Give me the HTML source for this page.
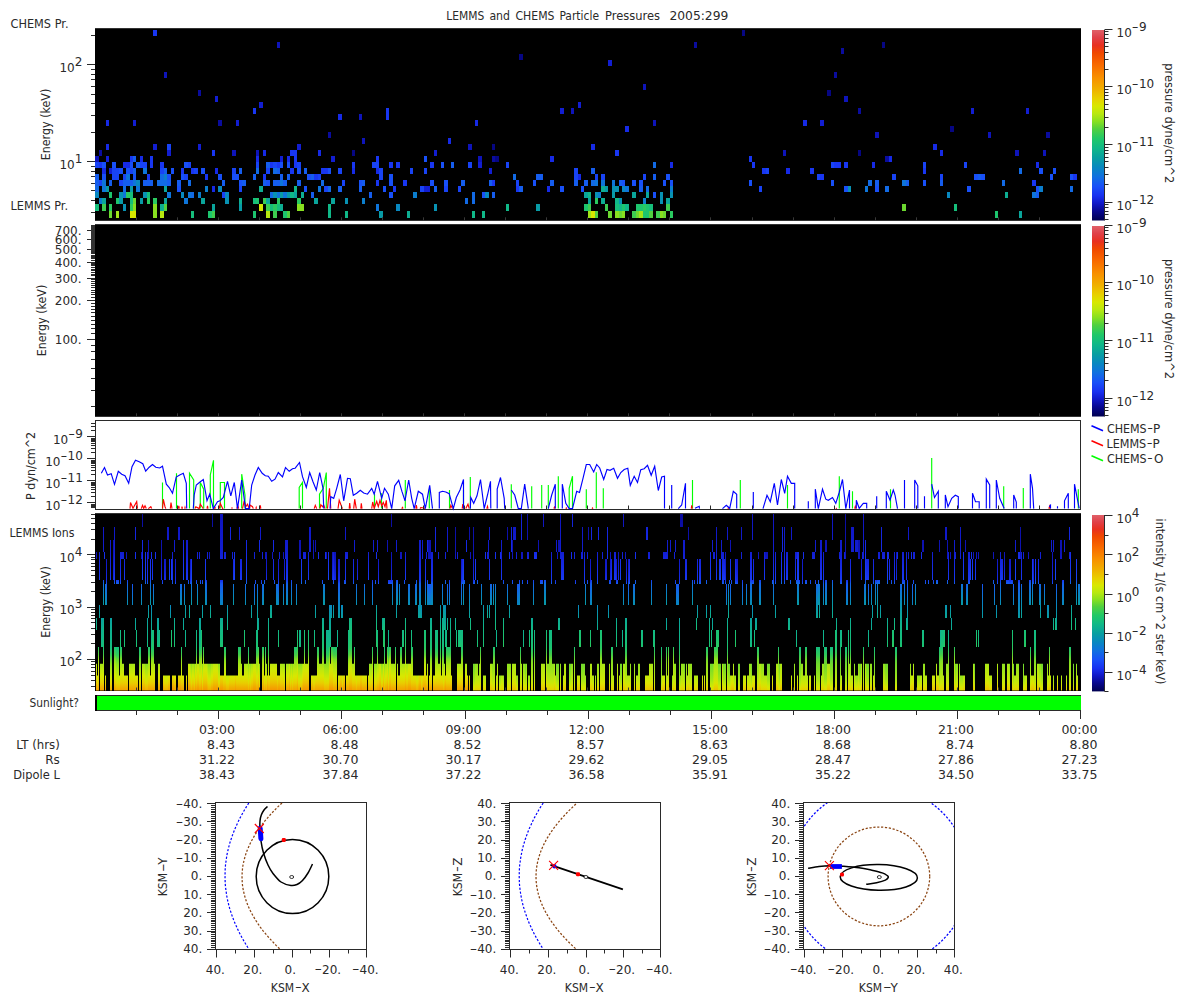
<!DOCTYPE html>
<html lang="en"><head><meta charset="utf-8"><title>LEMMS and CHEMS Particle Pressures 2005:299</title>
<style>html,body{margin:0;padding:0;background:#fff}body{width:1200px;height:1000px;overflow:hidden}svg{display:block}text{white-space:pre}</style>
</head><body>
<svg width="1200" height="1000" viewBox="0 0 1200 1000" font-family="'DejaVu Sans','Liberation Sans',sans-serif" font-size="12" fill="#2a2a2a">
<rect width="1200" height="1000" fill="#fff"/>
<text y="19.8"><tspan x="446.2" textLength="38" lengthAdjust="spacingAndGlyphs">LEMMS</tspan> <tspan x="489.4" textLength="20.6" lengthAdjust="spacingAndGlyphs">and</tspan> <tspan x="515.5" textLength="39" lengthAdjust="spacingAndGlyphs">CHEMS</tspan> <tspan x="559.4" textLength="39.6" lengthAdjust="spacingAndGlyphs">Particle</tspan> <tspan x="605.1" textLength="55" lengthAdjust="spacingAndGlyphs">Pressures</tspan>  <tspan x="669.4" textLength="59" lengthAdjust="spacingAndGlyphs">2005:299</tspan></text>
<defs><linearGradient id="cb" x1="0" y1="1" x2="0" y2="0"><stop offset="0.0" stop-color="#000050"/><stop offset="0.05" stop-color="#080890"/><stop offset="0.09" stop-color="#1018c8"/><stop offset="0.13" stop-color="#1830f0"/><stop offset="0.18" stop-color="#1850f8"/><stop offset="0.23" stop-color="#1070e0"/><stop offset="0.28" stop-color="#0888c0"/><stop offset="0.33" stop-color="#08a0a0"/><stop offset="0.38" stop-color="#10b888"/><stop offset="0.43" stop-color="#20c868"/><stop offset="0.48" stop-color="#50d040"/><stop offset="0.52" stop-color="#88e020"/><stop offset="0.56" stop-color="#b8e810"/><stop offset="0.6" stop-color="#d8e800"/><stop offset="0.64" stop-color="#e8d000"/><stop offset="0.69" stop-color="#f0b000"/><stop offset="0.75" stop-color="#f89000"/><stop offset="0.82" stop-color="#f86800"/><stop offset="0.88" stop-color="#f04800"/><stop offset="0.92" stop-color="#e83020"/><stop offset="0.96" stop-color="#e04048"/><stop offset="1.0" stop-color="#e06068"/></linearGradient></defs>
<rect x="95.0" y="28.2" width="986.0" height="192.60000000000002" fill="#000"/>
<path fill="#060683" d="M352 150h3v6h-3zM492 144h3v6h-3zM495 156h4v6h-4zM519 54h4v6h-4zM742 30h3v6h-3zM827 90h4v6h-4zM858 150h3v6h-3zM882 42h3v6h-3zM950 126h4v6h-4z"/>
<path fill="#0a0c9e" d="M99 150h3v6h-3zM198 90h3v6h-3zM218 120h4v6h-4zM328 132h3v6h-3zM492 156h3v6h-3zM694 42h3v6h-3zM834 72h3v6h-3zM841 48h3v6h-3zM858 108h3v6h-3zM885 156h4v6h-4zM1046 132h4v6h-4z"/>
<path fill="#0e14ba" d="M95 156h4v6h-4zM164 72h3v6h-3zM232 150h4v6h-4zM256 150h3v6h-3zM277 42h3v6h-3zM359 114h3v6h-3zM362 138h3v6h-3zM468 144h4v6h-4zM478 156h4v6h-4zM571 108h3v6h-3zM643 84h3v6h-3zM653 120h3v6h-3zM783 150h3v6h-3zM844 96h4v6h-4zM875 132h4v6h-4zM988 132h3v6h-3zM1015 150h4v6h-4zM1043 150h3v6h-3z"/>
<path fill="#121ed2" d="M106 156h3v6h-3zM109 168h3v6h-3zM133 120h3v6h-3zM153 144h4v6h-4zM167 150h4v6h-4zM198 144h3v6h-3zM215 96h3v6h-3zM236 120h3v6h-3zM259 102h4v6h-4zM280 156h3v6h-3zM297 144h4v6h-4zM331 156h4v6h-4zM424 186h3v6h-3zM427 186h3v6h-3zM434 150h3v6h-3zM478 162h4v6h-4zM489 168h3v6h-3zM560 108h4v6h-4zM578 102h3v6h-3zM608 60h4v6h-4zM820 120h4v6h-4zM971 108h3v6h-3zM1026 108h3v6h-3z"/>
<path fill="#162ae6" d="M102 168h4v6h-4zM106 144h3v6h-3zM106 120h3v6h-3zM123 162h3v6h-3zM126 162h4v6h-4zM140 156h3v6h-3zM212 186h3v6h-3zM215 168h3v6h-3zM256 156h3v6h-3zM263 150h3v6h-3zM287 156h3v6h-3zM318 150h3v6h-3zM338 114h4v6h-4zM352 168h3v6h-3zM376 168h3v6h-3zM448 138h3v6h-3zM475 120h3v6h-3zM547 186h3v6h-3zM550 156h4v6h-4zM578 174h3v6h-3zM591 144h4v6h-4zM625 126h4v6h-4zM670 162h3v6h-3zM786 168h4v6h-4zM803 120h4v6h-4zM872 162h3v6h-3zM889 156h3v6h-3zM933 144h4v6h-4zM940 150h3v6h-3zM1036 162h3v6h-3z"/>
<path fill="#1836f2" d="M99 162h3v6h-3zM130 156h3v6h-3zM147 174h3v6h-3zM150 162h3v6h-3zM150 156h3v6h-3zM153 30h4v6h-4zM160 162h4v6h-4zM181 168h3v6h-3zM191 168h3v6h-3zM205 174h3v6h-3zM212 150h3v6h-3zM253 108h3v6h-3zM263 174h3v6h-3zM270 162h3v6h-3zM277 162h3v6h-3zM290 168h4v6h-4zM290 150h4v6h-4zM294 162h3v6h-3zM294 156h3v6h-3zM294 150h3v6h-3zM314 174h4v6h-4zM321 168h3v6h-3zM324 168h4v6h-4zM352 162h3v6h-3zM376 180h3v6h-3zM376 156h3v6h-3zM386 114h3v6h-3zM386 108h3v6h-3zM389 162h4v6h-4zM393 186h3v6h-3zM396 162h4v6h-4zM403 180h4v6h-4zM430 162h4v6h-4zM492 180h3v6h-3zM516 186h3v6h-3zM615 150h4v6h-4zM749 156h3v6h-3zM752 162h3v6h-3zM762 168h4v6h-4zM810 168h4v6h-4zM820 174h4v6h-4zM834 162h3v6h-3zM837 162h4v6h-4zM844 162h4v6h-4zM923 168h3v6h-3zM1032 180h4v6h-4zM1073 174h4v6h-4z"/>
<path fill="#1843f5" d="M95 162h4v6h-4zM99 180h3v6h-3zM112 174h4v6h-4zM112 168h4v6h-4zM116 174h3v6h-3zM116 168h3v6h-3zM119 180h4v6h-4zM123 174h3v6h-3zM130 168h3v6h-3zM140 162h3v6h-3zM143 162h4v6h-4zM160 168h4v6h-4zM167 144h4v6h-4zM184 174h4v6h-4zM188 162h3v6h-3zM194 168h4v6h-4zM222 192h3v6h-3zM232 168h4v6h-4zM239 186h3v6h-3zM256 162h3v6h-3zM266 168h4v6h-4zM273 162h4v6h-4zM297 162h4v6h-4zM318 174h3v6h-3zM324 186h4v6h-4zM338 168h4v6h-4zM342 180h3v6h-3zM372 162h4v6h-4zM376 162h3v6h-3zM379 174h4v6h-4zM379 168h4v6h-4zM410 168h3v6h-3zM420 186h4v6h-4zM424 168h3v6h-3zM444 186h4v6h-4zM458 186h3v6h-3zM468 162h4v6h-4zM506 162h3v6h-3zM516 180h3v6h-3zM574 174h4v6h-4zM574 168h4v6h-4zM595 174h3v6h-3zM601 174h4v6h-4zM643 174h3v6h-3zM759 186h3v6h-3zM766 168h3v6h-3zM817 174h3v6h-3zM831 162h3v6h-3zM892 174h4v6h-4zM923 162h3v6h-3zM940 174h3v6h-3zM964 162h3v6h-3z"/>
<path fill="#1850f8" d="M102 174h4v6h-4zM102 162h4v6h-4zM112 162h4v6h-4zM119 168h4v6h-4zM126 168h4v6h-4zM130 162h3v6h-3zM133 174h3v6h-3zM167 174h4v6h-4zM171 168h3v6h-3zM177 186h4v6h-4zM181 174h3v6h-3zM184 162h4v6h-4zM201 168h4v6h-4zM218 174h4v6h-4zM232 174h4v6h-4zM236 174h3v6h-3zM239 180h3v6h-3zM266 180h4v6h-4zM280 162h3v6h-3zM287 162h3v6h-3zM297 168h4v6h-4zM304 186h3v6h-3zM307 174h4v6h-4zM328 168h3v6h-3zM359 180h3v6h-3zM383 186h3v6h-3zM389 192h4v6h-4zM389 180h4v6h-4zM389 174h4v6h-4zM424 156h3v6h-3zM430 180h4v6h-4zM441 162h3v6h-3zM444 180h4v6h-4zM482 192h3v6h-3zM533 180h3v6h-3zM560 186h4v6h-4zM581 186h3v6h-3zM622 180h3v6h-3zM632 180h4v6h-4zM639 180h4v6h-4zM653 192h3v6h-3zM663 180h3v6h-3zM666 174h4v6h-4zM670 180h3v6h-3zM749 180h3v6h-3zM831 180h3v6h-3zM844 186h4v6h-4zM875 186h4v6h-4zM923 180h3v6h-3zM967 186h4v6h-4zM974 174h4v6h-4zM981 174h4v6h-4zM1036 186h3v6h-3zM1039 168h4v6h-4zM1050 174h3v6h-3zM1053 168h3v6h-3zM1070 174h3v6h-3z"/>
<path fill="#155dee" d="M95 180h4v6h-4zM95 174h4v6h-4zM109 180h3v6h-3zM123 180h3v6h-3zM126 180h4v6h-4zM130 180h3v6h-3zM133 168h3v6h-3zM133 156h3v6h-3zM136 162h4v6h-4zM143 180h4v6h-4zM147 180h3v6h-3zM150 180h3v6h-3zM164 168h3v6h-3zM167 180h4v6h-4zM177 180h4v6h-4zM222 180h3v6h-3zM239 168h3v6h-3zM242 180h4v6h-4zM253 174h3v6h-3zM263 180h3v6h-3zM266 162h4v6h-4zM273 180h4v6h-4zM277 180h3v6h-3zM277 168h3v6h-3zM280 174h3v6h-3zM283 180h4v6h-4zM287 174h3v6h-3zM297 180h4v6h-4zM304 168h3v6h-3zM311 192h3v6h-3zM311 174h3v6h-3zM338 186h4v6h-4zM359 186h3v6h-3zM362 180h3v6h-3zM369 192h3v6h-3zM434 186h3v6h-3zM451 162h3v6h-3zM461 180h4v6h-4zM489 180h3v6h-3zM492 192h3v6h-3zM519 186h4v6h-4zM536 174h4v6h-4zM540 174h3v6h-3zM550 180h4v6h-4zM574 180h4v6h-4zM584 180h4v6h-4zM591 168h4v6h-4zM619 180h3v6h-3zM639 186h4v6h-4zM653 174h3v6h-3zM875 180h4v6h-4zM906 180h3v6h-3zM940 180h3v6h-3zM978 174h3v6h-3zM1036 192h3v6h-3z"/>
<path fill="#126ae5" d="M95 186h4v6h-4zM123 186h3v6h-3zM157 180h3v6h-3zM160 180h4v6h-4zM160 174h4v6h-4zM164 180h3v6h-3zM188 180h3v6h-3zM191 192h3v6h-3zM256 168h3v6h-3zM270 192h3v6h-3zM273 168h4v6h-4zM321 180h3v6h-3zM328 186h3v6h-3zM465 198h3v6h-3zM472 198h3v6h-3zM472 192h3v6h-3zM513 174h3v6h-3zM591 180h4v6h-4zM646 186h3v6h-3zM653 162h3v6h-3zM868 180h4v6h-4zM885 186h4v6h-4zM1002 180h3v6h-3zM1019 168h3v6h-3zM1070 186h3v6h-3z"/>
<path fill="#0e75da" d="M102 186h4v6h-4zM102 180h4v6h-4zM123 192h3v6h-3zM126 174h4v6h-4zM133 180h3v6h-3zM136 186h4v6h-4zM143 168h4v6h-4zM167 192h4v6h-4zM184 198h4v6h-4zM188 192h3v6h-3zM277 192h3v6h-3zM280 180h3v6h-3zM283 192h4v6h-4zM318 186h3v6h-3zM376 204h3v7h-3zM595 180h3v6h-3zM601 180h4v6h-4zM612 180h3v6h-3zM625 186h4v6h-4zM865 186h3v6h-3zM902 180h4v6h-4zM1032 192h4v6h-4z"/>
<path fill="#0b7ecd" d="M99 198h3v6h-3zM164 174h3v6h-3zM198 192h3v6h-3zM205 186h3v6h-3zM362 198h3v6h-3zM413 192h4v6h-4zM598 192h3v6h-3zM643 198h3v6h-3zM670 186h3v6h-3zM1039 186h4v6h-4z"/>
<path fill="#0888c0" d="M95 192h4v6h-4zM136 180h4v6h-4zM181 192h3v6h-3zM218 186h4v6h-4zM225 192h4v6h-4zM396 204h4v7h-4zM485 192h4v6h-4zM622 186h3v6h-3zM947 192h3v6h-3z"/>
<path fill="#0892b3" d="M119 192h4v6h-4zM123 204h3v7h-3zM143 192h4v6h-4zM225 198h4v6h-4zM273 192h4v6h-4zM345 198h3v6h-3zM434 204h3v7h-3zM595 192h3v6h-3zM612 186h3v6h-3zM615 186h4v6h-4zM619 198h3v6h-3zM660 198h3v6h-3zM660 192h3v6h-3zM670 192h3v6h-3zM848 186h3v6h-3z"/>
<path fill="#089ba6" d="M106 186h3v6h-3zM119 198h4v6h-4zM130 186h3v6h-3zM140 198h3v6h-3zM239 204h3v7h-3zM280 192h3v6h-3zM287 192h3v6h-3zM379 211h4v7h-4zM536 204h4v7h-4zM605 186h3v6h-3zM612 192h3v6h-3z"/>
<path fill="#0aa59b" d="M102 198h4v6h-4zM164 198h3v6h-3zM164 186h3v6h-3zM201 198h4v6h-4zM212 204h3v7h-3zM266 198h4v6h-4zM294 192h3v6h-3zM314 198h4v6h-4zM331 198h4v6h-4zM584 192h4v6h-4zM588 198h3v6h-3zM632 192h4v6h-4zM646 192h3v6h-3zM666 198h4v6h-4zM1019 211h3v7h-3z"/>
<path fill="#0dae92" d="M160 204h4v7h-4zM239 198h3v6h-3zM259 186h4v6h-4zM280 204h3v7h-3zM301 192h3v6h-3zM407 211h3v7h-3zM601 198h4v6h-4zM601 186h4v6h-4zM1005 192h3v6h-3z"/>
<path fill="#10b888" d="M290 192h4v6h-4zM294 186h3v6h-3zM328 211h3v7h-3zM328 204h3v7h-3zM345 211h3v7h-3zM472 211h3v7h-3zM482 211h3v7h-3zM506 204h3v7h-3zM588 192h3v6h-3zM615 198h4v6h-4zM619 204h3v7h-3zM625 204h4v7h-4z"/>
<path fill="#16be7b" d="M95 204h4v7h-4zM130 198h3v6h-3zM130 192h3v6h-3zM147 192h3v6h-3zM191 211h3v7h-3zM253 198h3v6h-3zM270 204h3v7h-3zM277 204h3v7h-3zM615 204h4v7h-4zM649 204h4v7h-4zM954 204h3v7h-3z"/>
<path fill="#1dc56e" d="M109 192h3v6h-3zM116 198h3v6h-3zM208 211h4v7h-4zM253 211h3v7h-3zM256 198h3v6h-3zM283 211h4v7h-4zM584 204h4v7h-4zM622 204h3v7h-3zM636 204h3v7h-3zM639 204h4v7h-4zM643 211h3v7h-3zM646 211h3v7h-3zM646 204h3v7h-3zM995 211h3v7h-3z"/>
<path fill="#2aca60" d="M109 204h3v7h-3zM126 192h4v6h-4zM130 204h3v7h-3zM147 198h3v6h-3zM153 198h4v6h-4zM273 204h4v7h-4zM277 198h3v6h-3zM297 198h4v6h-4zM595 198h3v6h-3zM643 204h3v7h-3zM670 211h3v7h-3z"/>
<path fill="#3dcd50" d="M102 204h4v7h-4zM212 211h3v7h-3zM263 198h3v6h-3zM266 204h4v7h-4zM273 211h4v7h-4zM588 204h3v7h-3zM605 204h3v7h-3zM632 211h4v7h-4zM656 211h4v7h-4zM666 204h4v7h-4z"/>
<path fill="#50d040" d="M164 204h3v7h-3zM287 211h3v7h-3zM595 211h3v7h-3zM649 211h4v7h-4z"/>
<path fill="#6cd830" d="M109 211h3v7h-3zM133 198h3v6h-3zM608 211h4v7h-4zM619 211h3v7h-3zM636 211h3v7h-3zM663 211h3v7h-3zM902 204h4v7h-4z"/>
<path fill="#88e020" d="M133 204h3v7h-3zM153 211h4v7h-4zM153 204h4v7h-4zM297 204h4v7h-4zM301 204h3v7h-3zM615 211h4v7h-4zM622 211h3v7h-3zM660 211h3v7h-3z"/>
<path fill="#a0e418" d="M116 211h3v7h-3zM588 211h3v7h-3zM639 211h4v7h-4z"/>
<path fill="#b8e810" d="M160 211h4v7h-4zM266 211h4v7h-4z"/>
<path fill="#d8e800" d="M130 211h3v7h-3zM133 211h3v7h-3zM259 204h4v7h-4zM591 211h4v7h-4z"/>
<path d="M136.5 217.3V220.8M177.5 217.3V220.8M218.5 217.3V220.8M259.5 217.3V220.8M300.5 217.3V220.8M341.5 217.3V220.8M382.5 217.3V220.8M423.5 217.3V220.8M464.5 217.3V220.8M505.5 217.3V220.8M546.5 217.3V220.8M587.5 217.3V220.8M628.5 217.3V220.8M669.5 217.3V220.8M710.5 217.3V220.8M752.5 217.3V220.8M793.5 217.3V220.8M834.5 217.3V220.8M875.5 217.3V220.8M916.5 217.3V220.8M957.5 217.3V220.8M998.5 217.3V220.8M1039.5 217.3V220.8" stroke="#383838" stroke-width="1" fill="none"/>
<path d="M91.0 212.5H95.0M91.0 200.5H95.0M91.0 190.5H95.0M91.0 183.5H95.0M91.0 176.5H95.0M91.0 171.5H95.0M91.0 166.5H95.0M87.0 161.5H95.0M91.0 132.5H95.0M91.0 115.5H95.0M91.0 103.5H95.0M91.0 94.5H95.0M91.0 86.5H95.0M91.0 79.5H95.0M91.0 74.5H95.0M91.0 69.5H95.0M87.0 64.5H95.0M91.0 35.5H95.0" stroke="#2a2a2a" stroke-width="1" fill="none"/>
<text x="82.3" y="71.9" text-anchor="end" font-size="12">10<tspan dy="-6.1">2</tspan></text>
<text x="82.3" y="168.65" text-anchor="end" font-size="12">10<tspan dy="-6.1">1</tspan></text>
<text x="50" y="124.5" text-anchor="middle" font-size="12" textLength="71.5" lengthAdjust="spacingAndGlyphs" transform="rotate(-90 50 124.5)">Energy (keV)</text>
<text x="10.5" y="28" text-anchor="start" font-size="12" textLength="58" lengthAdjust="spacingAndGlyphs">CHEMS Pr.</text>
<text x="10.5" y="209.5" text-anchor="start" font-size="12" textLength="57.5" lengthAdjust="spacingAndGlyphs">LEMMS Pr.</text>
<rect x="1092" y="30" width="12.5" height="190.5" fill="url(#cb)"/>
<path d="M1104.5 30V220.5" stroke="#2a2a2a" stroke-width="1"/>
<text x="1116.5" y="36.9" text-anchor="start" font-size="12">10<tspan textLength="6.8" lengthAdjust="spacingAndGlyphs" dy="-6.1">-</tspan><tspan dx="0.3">9</tspan></text>
<text x="1116.5" y="93.9" text-anchor="start" font-size="12">10<tspan textLength="6.8" lengthAdjust="spacingAndGlyphs" dy="-6.1">-</tspan><tspan dx="0.3">10</tspan></text>
<text x="1116.5" y="151.9" text-anchor="start" font-size="12">10<tspan textLength="6.8" lengthAdjust="spacingAndGlyphs" dy="-6.1">-</tspan><tspan dx="0.3">11</tspan></text>
<text x="1116.5" y="209.9" text-anchor="start" font-size="12">10<tspan textLength="6.8" lengthAdjust="spacingAndGlyphs" dy="-6.1">-</tspan><tspan dx="0.3">12</tspan></text>
<path d="M1104.5 69.5h4M1104.5 59.5h4M1104.5 52.5h4M1104.5 46.5h4M1104.5 42.5h4M1104.5 38.5h4M1104.5 34.5h4M1104.5 31.5h4M1104.5 127.5h4M1104.5 117.5h4M1104.5 109.5h4M1104.5 104.5h4M1104.5 99.5h4M1104.5 95.5h4M1104.5 92.5h4M1104.5 89.5h4M1104.5 184.5h4M1104.5 174.5h4M1104.5 167.5h4M1104.5 161.5h4M1104.5 157.5h4M1104.5 153.5h4M1104.5 150.5h4M1104.5 147.5h4M1104.5 219.5h4M1104.5 214.5h4M1104.5 211.5h4M1104.5 207.5h4M1104.5 204.5h4M1104.5 29.5h8M1104.5 86.5h8M1104.5 144.5h8M1104.5 202.5h8" stroke="#2a2a2a" fill="none"/>
<text x="1164.5" y="123.2" text-anchor="middle" font-size="12" textLength="120" lengthAdjust="spacingAndGlyphs" transform="rotate(90 1164.5 123.2)">pressure dyne/cm^2</text>
<rect x="95.0" y="224.2" width="986.0" height="192.60000000000002" fill="#000"/>
<path d="M136.5 413.3V416.8M177.5 413.3V416.8M218.5 413.3V416.8M259.5 413.3V416.8M300.5 413.3V416.8M341.5 413.3V416.8M382.5 413.3V416.8M423.5 413.3V416.8M464.5 413.3V416.8M505.5 413.3V416.8M546.5 413.3V416.8M587.5 413.3V416.8M628.5 413.3V416.8M669.5 413.3V416.8M710.5 413.3V416.8M752.5 413.3V416.8M793.5 413.3V416.8M834.5 413.3V416.8M875.5 413.3V416.8M916.5 413.3V416.8M957.5 413.3V416.8M998.5 413.3V416.8M1039.5 413.3V416.8" stroke="#383838" stroke-width="1" fill="none"/>
<path d="M91 406.5H95M91 390.5H95M91 378.5H95M91 368.5H95M91 359.5H95M91 351.5H95M91 345.5H95M91 333.5H95M91 328.5H95M91 324.5H95M91 320.5H95M91 316.5H95M91 312.5H95M91 309.5H95M91 306.5H95M91 303.5H95M91 297.5H95M91 294.5H95M91 292.5H95M91 290.5H95M91 287.5H95M91 285.5H95M91 283.5H95M91 281.5H95M91 279.5H95M91 275.5H95M91 274.5H95M91 272.5H95M91 270.5H95M91 269.5H95M91 267.5H95M91 265.5H95M91 264.5H95M91 263.5H95M91 260.5H95M91 258.5H95M91 257.5H95M91 256.5H95M91 255.5H95M91 253.5H95M91 252.5H95M91 251.5H95M91 250.5H95M91 248.5H95M91 246.5H95M91 245.5H95M91 244.5H95M91 243.5H95M91 242.5H95M91 241.5H95M91 240.5H95M91 239.5H95M91 238.5H95M91 237.5H95M91 236.5H95M91 235.5H95M91 234.5H95M91 233.5H95M91 232.5H95M91 232.5H95M91 231.5H95M91 229.5H95M91 228.5H95M91 228.5H95M91 227.5H95M91 226.5H95M91 225.5H95M91 225.5H95M87 339.5H95M87 300.5H95M87 278.5H95M87 262.5H95M87 249.5H95M87 239.5H95M87 230.5H95" stroke="#2a2a2a" fill="none"/>
<rect x="91" y="225.5" width="4" height="26" fill="#333"/>
<text x="81.5" y="343.9" text-anchor="end" font-size="12">100.</text>
<text x="81.5" y="304.9" text-anchor="end" font-size="12">200.</text>
<text x="81.5" y="282.9" text-anchor="end" font-size="12">300.</text>
<text x="81.5" y="266.9" text-anchor="end" font-size="12">400.</text>
<text x="81.5" y="253.9" text-anchor="end" font-size="12">500.</text>
<text x="81.5" y="243.9" text-anchor="end" font-size="12">600.</text>
<text x="81.5" y="234.9" text-anchor="end" font-size="12">700.</text>
<text x="46" y="320.5" text-anchor="middle" font-size="12" textLength="71.5" lengthAdjust="spacingAndGlyphs" transform="rotate(-90 46 320.5)">Energy (keV)</text>
<rect x="1092" y="226" width="12.5" height="190.5" fill="url(#cb)"/>
<path d="M1104.5 226V416.5" stroke="#2a2a2a" stroke-width="1"/>
<text x="1116.5" y="232.9" text-anchor="start" font-size="12">10<tspan textLength="6.8" lengthAdjust="spacingAndGlyphs" dy="-6.1">-</tspan><tspan dx="0.3">9</tspan></text>
<text x="1116.5" y="289.9" text-anchor="start" font-size="12">10<tspan textLength="6.8" lengthAdjust="spacingAndGlyphs" dy="-6.1">-</tspan><tspan dx="0.3">10</tspan></text>
<text x="1116.5" y="347.9" text-anchor="start" font-size="12">10<tspan textLength="6.8" lengthAdjust="spacingAndGlyphs" dy="-6.1">-</tspan><tspan dx="0.3">11</tspan></text>
<text x="1116.5" y="405.9" text-anchor="start" font-size="12">10<tspan textLength="6.8" lengthAdjust="spacingAndGlyphs" dy="-6.1">-</tspan><tspan dx="0.3">12</tspan></text>
<path d="M1104.5 265.5h4M1104.5 255.5h4M1104.5 248.5h4M1104.5 242.5h4M1104.5 238.5h4M1104.5 234.5h4M1104.5 230.5h4M1104.5 227.5h4M1104.5 323.5h4M1104.5 313.5h4M1104.5 305.5h4M1104.5 300.5h4M1104.5 295.5h4M1104.5 291.5h4M1104.5 288.5h4M1104.5 285.5h4M1104.5 380.5h4M1104.5 370.5h4M1104.5 363.5h4M1104.5 357.5h4M1104.5 353.5h4M1104.5 349.5h4M1104.5 346.5h4M1104.5 343.5h4M1104.5 415.5h4M1104.5 410.5h4M1104.5 407.5h4M1104.5 403.5h4M1104.5 400.5h4M1104.5 225.5h8M1104.5 282.5h8M1104.5 340.5h8M1104.5 398.5h8" stroke="#2a2a2a" fill="none"/>
<text x="1164.5" y="319" text-anchor="middle" font-size="12" textLength="120" lengthAdjust="spacingAndGlyphs" transform="rotate(90 1164.5 319)">pressure dyne/cm^2</text>
<rect x="95.5" y="420.5" width="985.0" height="89.0" fill="#fff" stroke="#2a2a2a"/>
<g fill="none" stroke-width="1.15" stroke-linejoin="miter"><path stroke="#00ff00" d="M162.5 508.6L162.5 482.5M176.5 508.6L176.5 473.3M189.5 508.6L189.5 473.3L193.7 480.0L193.7 508.6M200.3 508.6L200.3 482.5L203.7 489.2L203.7 508.6M210.3 508.6L210.3 475.0L213.5 460.3L213.5 508.6M220.3 508.6L220.3 482.5L224.5 482.5L224.5 508.6M241.7 508.6L241.7 474.2L245.0 495.0L245.0 508.6M299.2 508.6L299.2 487.5L302.5 482.5L302.5 508.6M319.5 508.6L319.5 494.2L323.3 488.3L326.3 472.5L326.3 508.6M374.5 508.6L374.5 494.2M381.5 508.6L381.5 493.3M405.3 508.6L405.3 480.0M429.3 508.6L429.3 489.2M449.5 508.6L449.5 490.0M463.5 508.6L463.5 490.0M470.3 508.6L470.3 477.0M511.3 508.6L511.3 484.2M531.7 508.6L531.7 486.2M541.7 508.6L541.7 485.0M548.3 508.6L548.3 485.0M558.3 508.6L558.3 476.2M569.2 508.6L569.2 488.3L572.5 476.2L572.5 508.6M586.3 508.6L586.3 489.2M596.3 508.6L596.3 472.2M603.3 508.6L603.3 488.3M692.5 508.6L692.5 480.0M740.3 508.6L740.3 480.0M787.5 508.6L787.5 485.0M839.3 508.6L839.3 476.2M852.5 508.6L852.5 491.2M890.5 508.6L890.5 489.2M931.7 508.6L931.7 458.0M1003.7 508.6L1003.7 486.2M1023.3 508.6L1023.3 488.0M1078.3 508.6L1078.3 489.2"/><path stroke="#ff0000" d="M130.0 508.6L130.5 502.5L133.0 508.3L136.7 501.7L137.5 508.6M141.3 508.6L142.5 505.3L143.7 508.3L145.0 505.8L146.3 508.6M148.3 508.6L150.8 506.7L151.7 508.6M162.5 508.6L163.3 499.2L165.0 506.7L165.8 508.6M170.3 508.6L171.0 502.5L172.0 508.6M178.3 508.6L178.8 505.8L179.3 508.6M181.7 508.6L182.0 506.7L182.5 508.6M184.7 508.6L185.0 507.5L185.3 508.6M195.0 508.6L195.8 506.7L199.2 508.6L200.3 504.2L202.5 507.5L203.3 508.6M207.0 508.6L207.5 505.8L208.0 508.6M214.2 508.6L215.0 507.5L215.5 508.6M219.2 508.6L220.3 503.3L222.5 508.3L223.3 508.6M231.7 508.6L232.0 508.0L232.3 508.6M236.7 508.6L237.8 505.8L238.7 508.6M242.5 508.6L244.2 500.8L245.8 506.7L247.5 504.2L249.2 508.6M249.7 508.6L250.0 505.0L252.5 506.7L253.3 508.6M255.8 508.6L256.2 507.5L256.5 508.6M260.0 508.6L260.3 505.3L260.8 508.6M314.2 508.6L315.3 505.3L316.7 508.6M320.0 508.6L320.8 504.7L322.5 506.7L323.7 505.0L325.0 508.6M327.5 508.6L329.5 488.3L330.8 508.6M338.0 508.6L339.2 500.3L341.7 506.7L342.5 508.6M349.2 508.6L349.7 503.0L350.3 508.6M353.7 508.6L354.7 499.2L356.3 508.6M360.8 508.6L361.3 503.3L362.0 508.6M371.7 508.6L372.7 502.0L374.2 508.3L376.7 501.3L378.3 506.7L380.0 500.3L381.7 505.8L383.3 502.5L385.0 506.7L386.3 500.3L387.0 508.6M401.7 508.6L402.5 507.5L403.0 508.6M415.8 508.6L416.3 505.0L417.0 508.6M420.0 508.6L420.8 507.5L424.2 508.0L425.0 508.6M450.0 508.6L450.8 505.3L452.5 508.6M462.2 508.6L462.8 504.2L463.7 508.6M465.8 508.6L468.0 504.2L469.2 508.6M486.7 508.6L487.5 506.3L488.0 508.6M553.8 508.6L554.5 507.2L555.0 508.6M565.8 508.6L566.3 508.0L566.8 508.6M592.0 508.6L592.5 508.0L593.0 508.6M691.3 508.6L691.7 505.3L692.2 508.6M727.8 508.6L728.3 508.0L728.8 508.6M835.8 508.6L836.3 508.3L836.8 508.6M854.7 508.6L855.3 506.3L856.0 508.6M1048.8 508.6L1049.7 506.2L1050.2 508.6"/><path stroke="#0000ff" d="M101.3 473.3L104.5 467.5L107.5 475.0L111.2 473.7L114.5 484.3L118.3 471.3L121.7 474.2L125.0 475.8L128.7 483.3L132.0 466.7L135.5 460.3L139.2 461.7L142.8 463.7L145.7 471.2L149.2 467.2L152.5 464.5L155.8 467.2L159.7 468.0L162.5 466.2L166.3 484.2L169.2 487.5L172.5 493.3L176.2 477.0L179.7 475.0L183.3 473.3L186.3 483.3L186.7 508.6M193.3 508.6L194.2 495.0L196.3 485.0L200.0 482.0L203.3 479.5L207.0 500.8L209.7 494.2L213.3 508.6L217.5 501.7L220.0 500.8L223.3 497.5L227.5 481.3L230.8 495.8L234.3 482.5L237.5 508.6L241.7 480.0L245.5 508.6L249.2 508.6L251.7 485.0L255.0 475.0L258.3 467.5L262.2 473.3L265.3 475.8L268.3 476.3L271.7 481.3L275.0 479.2L278.3 472.5L282.5 477.0L285.5 467.5L289.2 471.3L292.5 468.7L295.0 468.3M295.0 468.3L299.5 462.5L302.5 476.7L306.3 487.5L309.7 472.5L313.0 481.7L316.3 490.0L319.7 472.5L323.0 488.3L323.7 508.6M330.0 508.6L330.8 496.7L333.7 498.3L336.7 488.3L340.3 474.5L343.7 500.8L347.5 478.3L350.3 478.7L353.3 495.3L356.7 493.3L360.3 490.3L363.7 493.0L367.5 494.2L371.7 488.3L374.2 494.2L377.5 481.3L381.7 498.3L384.5 488.3L388.3 494.2L391.7 508.6L394.7 485.8L398.7 480.3L402.0 491.7L405.0 500.8L408.7 480.0L411.7 498.3L414.2 508.6L418.3 491.3L422.5 494.2L425.3 508.6L429.7 485.3L432.5 508.6M439.3 508.6L439.3 492.5L442.5 491.3L445.8 492.0L449.2 493.7L453.3 508.6L456.3 497.5L460.0 490.0L463.5 479.5L463.5 508.6M470.3 508.6L470.8 497.5L473.7 503.3L477.0 495.8L480.5 479.5L484.2 508.6L487.5 495.0L490.5 481.3L490.8 508.6M497.2 508.6L497.2 489.2L500.5 477.5L504.2 498.3L504.7 508.6M511.3 490.0L514.7 495.0L518.3 508.6L521.3 508.6L524.7 484.2L528.3 508.6M548.3 508.6L551.7 495.0L555.3 484.2L555.3 508.6M562.3 508.6L562.3 484.2L565.8 503.3L569.2 508.6L572.5 508.6L576.7 491.3L579.5 492.5L583.0 478.3L586.3 464.5L589.7 464.5L593.7 472.0L596.7 464.5L599.7 468.0L603.7 479.5L607.0 469.5L610.0 470.3L613.7 468.3L617.5 478.3L620.8 472.5L624.2 469.5L627.8 468.3L630.3 485.3L634.2 476.3L637.5 482.5L640.8 469.7L644.2 468.7L647.5 465.3L651.2 475.3L654.7 466.3L658.3 490.5L661.7 477.0L664.5 476.3L664.5 508.6M671.7 508.6L671.7 485.0M678.3 508.6L681.7 505.0L685.5 483.3L685.5 508.6M695.0 508.3L699.2 506.3L699.5 508.6M722.5 508.6L726.3 505.3L729.7 508.3L733.3 491.3L736.7 494.2L736.7 508.6M753.3 508.6L753.3 492.0M763.0 508.6L767.0 495.3L770.3 501.7L774.3 483.3L777.5 505.0L781.3 479.5L784.7 493.3L787.5 476.2L791.3 483.3L794.7 483.3L794.7 508.6M808.3 508.6L808.3 501.2M815.3 508.6L815.3 489.2L818.3 508.6L822.5 489.2L825.8 499.2L828.3 500.3L832.5 497.5L835.8 503.3L839.2 492.5L842.5 479.5L845.8 508.6L849.5 490.0L849.5 508.6M856.3 508.6L856.3 500.3L859.2 508.3L863.3 503.3L866.7 503.3L866.7 508.6M876.7 508.6L876.7 496.2M886.3 508.6L886.3 491.2L890.0 500.0L893.3 490.0L895.0 495.0M895.0 495.0L897.5 508.6M904.5 508.6L904.5 480.0M914.7 508.6L914.7 480.0L917.8 485.8L917.8 508.6M924.5 508.6L924.5 496.2M931.7 484.2L934.5 497.5L938.3 491.3L938.3 508.6M945.3 508.6L945.3 495.0L948.0 506.7L951.7 498.3L955.3 495.3L958.3 496.7L958.3 508.6M972.5 508.6L972.5 493.3L975.5 501.7L979.2 501.7L979.2 508.6M986.3 508.6L986.3 479.2L989.7 485.0L989.7 508.6M996.3 508.6L996.3 480.0L999.7 498.3L1004.2 508.6M1013.7 508.6L1013.7 495.0L1016.3 502.0L1016.3 508.6M1030.3 508.6L1030.3 474.2L1032.5 488.3L1033.7 508.6M1049.2 506.7L1050.5 505.3L1050.5 508.6M1057.5 508.6L1057.5 506.3M1064.5 508.6L1064.5 500.8L1068.3 493.3L1068.3 508.6M1074.5 508.6L1074.5 484.2L1079.2 508.3"/></g>
<path d="M136.5 505.5V509.0M177.5 505.5V509.0M218.5 505.5V509.0M259.5 505.5V509.0M300.5 505.5V509.0M341.5 505.5V509.0M382.5 505.5V509.0M423.5 505.5V509.0M464.5 505.5V509.0M505.5 505.5V509.0M546.5 505.5V509.0M587.5 505.5V509.0M628.5 505.5V509.0M669.5 505.5V509.0M710.5 505.5V509.0M752.5 505.5V509.0M793.5 505.5V509.0M834.5 505.5V509.0M875.5 505.5V509.0M916.5 505.5V509.0M957.5 505.5V509.0M998.5 505.5V509.0M1039.5 505.5V509.0" stroke="#2a2a2a" stroke-width="1" fill="none"/>
<path d="M91.0 507.5H95.0M91.0 506.5H95.0M91.0 505.5H95.0M91.0 504.5H95.0M87.0 502.5H95.0M91.0 496.5H95.0M91.0 492.5H95.0M91.0 489.5H95.0M91.0 487.5H95.0M91.0 485.5H95.0M91.0 484.5H95.0M91.0 483.5H95.0M91.0 482.5H95.0M87.0 480.5H95.0M91.0 474.5H95.0M91.0 470.5H95.0M91.0 467.5H95.0M91.0 465.5H95.0M91.0 463.5H95.0M91.0 462.5H95.0M91.0 461.5H95.0M91.0 460.5H95.0M87.0 458.5H95.0M91.0 452.5H95.0M91.0 448.5H95.0M91.0 445.5H95.0M91.0 443.5H95.0M91.0 441.5H95.0M91.0 440.5H95.0M91.0 439.5H95.0M91.0 438.5H95.0M87.0 436.5H95.0M91.0 430.5H95.0M91.0 426.5H95.0M91.0 423.5H95.0" stroke="#2a2a2a" stroke-width="1" fill="none"/>
<text x="82.9" y="443.9" text-anchor="end" font-size="12">10<tspan textLength="6.8" lengthAdjust="spacingAndGlyphs" dy="-6.1">-</tspan><tspan dx="0.3">9</tspan></text>
<text x="82.9" y="465.9" text-anchor="end" font-size="12">10<tspan textLength="6.8" lengthAdjust="spacingAndGlyphs" dy="-6.1">-</tspan><tspan dx="0.3">10</tspan></text>
<text x="82.9" y="487.9" text-anchor="end" font-size="12">10<tspan textLength="6.8" lengthAdjust="spacingAndGlyphs" dy="-6.1">-</tspan><tspan dx="0.3">11</tspan></text>
<text x="82.9" y="509.9" text-anchor="end" font-size="12">10<tspan textLength="6.8" lengthAdjust="spacingAndGlyphs" dy="-6.1">-</tspan><tspan dx="0.3">12</tspan></text>
<text x="35" y="465.9" text-anchor="middle" font-size="12" textLength="68" lengthAdjust="spacingAndGlyphs" transform="rotate(-90 35 465.9)">P dyn/cm^2</text>
<path d="M1091.5 425.8L1103 430.8" stroke="#0000ff" stroke-width="1.5" fill="none"/>
<text x="1106.9" y="432.9"><tspan textLength="39.8" lengthAdjust="spacingAndGlyphs">CHEMS</tspan><tspan textLength="5.8" lengthAdjust="spacingAndGlyphs" dx="0.55" dy="-0.5">-</tspan><tspan dx="-0.15" dy="0.5">P</tspan></text>
<path d="M1091.5 440.8L1103 445.8" stroke="#ff0000" stroke-width="1.5" fill="none"/>
<text x="1106.4" y="447.9"><tspan textLength="39.8" lengthAdjust="spacingAndGlyphs">LEMMS</tspan><tspan textLength="5.8" lengthAdjust="spacingAndGlyphs" dx="0.55" dy="-0.5">-</tspan><tspan dx="-0.15" dy="0.5">P</tspan></text>
<path d="M1091.5 455.8L1103 460.8" stroke="#00ff00" stroke-width="1.5" fill="none"/>
<text x="1106.9" y="462.9"><tspan textLength="39.8" lengthAdjust="spacingAndGlyphs">CHEMS</tspan><tspan textLength="5.8" lengthAdjust="spacingAndGlyphs" dx="0.55" dy="-0.5">-</tspan><tspan dx="0.9" dy="0.5">O</tspan></text>
<rect x="95.0" y="513.2" width="986.0" height="177.79999999999995" fill="#000"/>
<defs><linearGradient id="g400" gradientUnits="userSpaceOnUse" x1="0" y1="513.0" x2="0" y2="691.0"><stop offset="0.0" stop-color="#0e14ba"/><stop offset="0.0955" stop-color="#1018c8"/><stop offset="0.2191" stop-color="#121ed2"/><stop offset="0.2584" stop-color="#1424dc"/><stop offset="0.3202" stop-color="#172deb"/><stop offset="0.3764" stop-color="#183af2"/><stop offset="0.3989" stop-color="#1363ea"/><stop offset="0.4607" stop-color="#0b7ecd"/><stop offset="0.5169" stop-color="#0892b3"/><stop offset="0.5899" stop-color="#0baa96"/><stop offset="0.6573" stop-color="#12ba85"/><stop offset="0.7135" stop-color="#16be7b"/><stop offset="0.7584" stop-color="#1dc56e"/><stop offset="0.7978" stop-color="#46ce48"/><stop offset="0.8258" stop-color="#88e020"/><stop offset="0.8483" stop-color="#a6e516"/><stop offset="0.882" stop-color="#c0e80c"/><stop offset="0.9157" stop-color="#d8e800"/><stop offset="0.9326" stop-color="#dedf00"/><stop offset="0.9551" stop-color="#e9cd00"/><stop offset="0.9775" stop-color="#efb300"/><stop offset="0.9972" stop-color="#f4a000"/></linearGradient><linearGradient id="g401" gradientUnits="userSpaceOnUse" x1="0" y1="513.0" x2="0" y2="691.0"><stop offset="0.0" stop-color="#121fd4"/><stop offset="0.0955" stop-color="#1425de"/><stop offset="0.2191" stop-color="#162be8"/><stop offset="0.2584" stop-color="#1831f0"/><stop offset="0.3202" stop-color="#183bf3"/><stop offset="0.3764" stop-color="#1848f6"/><stop offset="0.3989" stop-color="#1071df"/><stop offset="0.4607" stop-color="#0889bf"/><stop offset="0.5169" stop-color="#089ca5"/><stop offset="0.5899" stop-color="#0fb48c"/><stop offset="0.6573" stop-color="#19c177"/><stop offset="0.7135" stop-color="#1dc56d"/><stop offset="0.7584" stop-color="#2cca5e"/><stop offset="0.7978" stop-color="#61d536"/><stop offset="0.8258" stop-color="#a2e417"/><stop offset="0.8483" stop-color="#bee80d"/><stop offset="0.882" stop-color="#d2e803"/><stop offset="0.9157" stop-color="#e1db00"/><stop offset="0.9326" stop-color="#e7d200"/><stop offset="0.9551" stop-color="#ecbf00"/><stop offset="0.9775" stop-color="#f2a700"/><stop offset="0.9972" stop-color="#f79400"/></linearGradient><linearGradient id="g402" gradientUnits="userSpaceOnUse" x1="0" y1="513.0" x2="0" y2="691.0"><stop offset="0.0" stop-color="#0a0b9b"/><stop offset="0.0955" stop-color="#0c0fa9"/><stop offset="0.2191" stop-color="#0e13b7"/><stop offset="0.2584" stop-color="#1017c5"/><stop offset="0.3202" stop-color="#1320d5"/><stop offset="0.3764" stop-color="#172ce9"/><stop offset="0.3989" stop-color="#1755f4"/><stop offset="0.4607" stop-color="#0f74db"/><stop offset="0.5169" stop-color="#0887c1"/><stop offset="0.5899" stop-color="#089fa1"/><stop offset="0.6573" stop-color="#0db090"/><stop offset="0.7135" stop-color="#10b789"/><stop offset="0.7584" stop-color="#16be7c"/><stop offset="0.7978" stop-color="#31cb5a"/><stop offset="0.8258" stop-color="#69d732"/><stop offset="0.8483" stop-color="#8ce11f"/><stop offset="0.882" stop-color="#aae615"/><stop offset="0.9157" stop-color="#c6e809"/><stop offset="0.9326" stop-color="#d2e803"/><stop offset="0.9551" stop-color="#e1da00"/><stop offset="0.9775" stop-color="#ecc100"/><stop offset="0.9972" stop-color="#f1ac00"/></linearGradient><linearGradient id="g410" gradientUnits="userSpaceOnUse" x1="0" y1="513.0" x2="0" y2="691.0"><stop offset="0.0" stop-color="#0e14ba"/><stop offset="0.0955" stop-color="#1018c8"/><stop offset="0.2191" stop-color="#121ed2"/><stop offset="0.2584" stop-color="#1424dc"/><stop offset="0.3202" stop-color="#172deb"/><stop offset="0.3764" stop-color="#183af2"/><stop offset="0.3989" stop-color="#1363ea"/><stop offset="0.4607" stop-color="#0b7ecd"/><stop offset="0.5169" stop-color="#0892b3"/><stop offset="0.5899" stop-color="#0baa96"/><stop offset="0.6573" stop-color="#12ba85"/><stop offset="0.7135" stop-color="#16be7b"/><stop offset="0.7584" stop-color="#1dc56e"/><stop offset="0.7978" stop-color="#46ce48"/><stop offset="0.8258" stop-color="#79dc29"/><stop offset="0.8483" stop-color="#8fe11e"/><stop offset="0.882" stop-color="#9de419"/><stop offset="0.9157" stop-color="#b2e712"/><stop offset="0.9326" stop-color="#bbe80f"/><stop offset="0.9551" stop-color="#cce806"/><stop offset="0.9775" stop-color="#dfde00"/><stop offset="0.9972" stop-color="#e9cd00"/></linearGradient><linearGradient id="g411" gradientUnits="userSpaceOnUse" x1="0" y1="513.0" x2="0" y2="691.0"><stop offset="0.0" stop-color="#121fd4"/><stop offset="0.0955" stop-color="#1425de"/><stop offset="0.2191" stop-color="#162be8"/><stop offset="0.2584" stop-color="#1831f0"/><stop offset="0.3202" stop-color="#183bf3"/><stop offset="0.3764" stop-color="#1848f6"/><stop offset="0.3989" stop-color="#1071df"/><stop offset="0.4607" stop-color="#0889bf"/><stop offset="0.5169" stop-color="#089ca5"/><stop offset="0.5899" stop-color="#0fb48c"/><stop offset="0.6573" stop-color="#19c177"/><stop offset="0.7135" stop-color="#1dc56d"/><stop offset="0.7584" stop-color="#2cca5e"/><stop offset="0.7978" stop-color="#61d536"/><stop offset="0.8258" stop-color="#96e21b"/><stop offset="0.8483" stop-color="#a9e615"/><stop offset="0.882" stop-color="#b8e810"/><stop offset="0.9157" stop-color="#c6e809"/><stop offset="0.9326" stop-color="#cce806"/><stop offset="0.9551" stop-color="#dbe400"/><stop offset="0.9775" stop-color="#e7d100"/><stop offset="0.9972" stop-color="#ecbf00"/></linearGradient><linearGradient id="g412" gradientUnits="userSpaceOnUse" x1="0" y1="513.0" x2="0" y2="691.0"><stop offset="0.0" stop-color="#0a0b9b"/><stop offset="0.0955" stop-color="#0c0fa9"/><stop offset="0.2191" stop-color="#0e13b7"/><stop offset="0.2584" stop-color="#1017c5"/><stop offset="0.3202" stop-color="#1320d5"/><stop offset="0.3764" stop-color="#172ce9"/><stop offset="0.3989" stop-color="#1755f4"/><stop offset="0.4607" stop-color="#0f74db"/><stop offset="0.5169" stop-color="#0887c1"/><stop offset="0.5899" stop-color="#089fa1"/><stop offset="0.6573" stop-color="#0db090"/><stop offset="0.7135" stop-color="#10b789"/><stop offset="0.7584" stop-color="#16be7c"/><stop offset="0.7978" stop-color="#31cb5a"/><stop offset="0.8258" stop-color="#5ad33a"/><stop offset="0.8483" stop-color="#71d92d"/><stop offset="0.882" stop-color="#82de23"/><stop offset="0.9157" stop-color="#98e31b"/><stop offset="0.9326" stop-color="#a2e417"/><stop offset="0.9551" stop-color="#bae80f"/><stop offset="0.9775" stop-color="#d4e802"/><stop offset="0.9972" stop-color="#e1db00"/></linearGradient></defs><path fill="url(#g400)" d="M100 663.7h3v26.8h-3zM103 618.0h1v72.5h-1zM105 675.6h1v14.9h-1zM114 647.0h2v43.5h-2zM120 630.0h1v60.5h-1zM121 647.0h1v43.5h-1zM122 663.7h2v26.8h-2zM124 675.6h4v14.9h-4zM129 663.7h2v26.8h-2zM131 663.7h2v26.8h-2zM133 663.7h2v26.8h-2zM135 675.6h3v14.9h-3zM142 663.7h3v26.8h-3zM148 647.0h2v43.5h-2zM150 675.6h1v14.9h-1zM151 630.0h3v60.5h-3zM154 663.7h1v26.8h-1zM158 663.7h2v26.8h-2zM163 675.6h1v14.9h-1zM168 675.6h2v14.9h-2zM174 675.6h2v14.9h-2zM181 647.0h1v43.5h-1zM182 675.6h2v14.9h-2zM186 675.6h1v14.9h-1zM190 663.7h1v26.8h-1zM192 663.7h2v26.8h-2zM196 630.0h1v60.5h-1zM199 647.0h2v43.5h-2zM207 663.7h1v26.8h-1zM211 663.7h1v26.8h-1zM212 663.7h1v26.8h-1zM223 675.6h1v14.9h-1zM224 647.0h2v43.5h-2zM229 675.6h1v14.9h-1zM230 675.6h2v14.9h-2zM232 675.6h2v14.9h-2zM234 675.6h1v14.9h-1zM236 675.6h2v14.9h-2zM238 647.0h3v43.5h-3zM241 663.7h1v26.8h-1zM242 675.6h2v14.9h-2zM244 663.7h1v26.8h-1zM245 663.7h1v26.8h-1zM246 663.7h1v26.8h-1zM247 663.7h1v26.8h-1zM249 663.7h1v26.8h-1zM251 663.7h2v26.8h-2zM256 630.0h2v60.5h-2zM262 647.0h1v43.5h-1zM265 647.0h1v43.5h-1zM268 618.0h1v72.5h-1zM269 675.6h1v14.9h-1zM277 675.6h1v14.9h-1zM280 663.7h4v26.8h-4zM286 663.7h3v26.8h-3zM291 663.7h1v26.8h-1zM293 663.7h1v26.8h-1zM294 647.0h1v43.5h-1zM295 647.0h2v43.5h-2zM302 663.7h1v26.8h-1zM311 675.6h2v14.9h-2zM315 675.6h2v14.9h-2zM317 647.0h2v43.5h-2zM319 663.7h3v26.8h-3zM322 618.0h1v72.5h-1zM323 618.0h1v72.5h-1zM333 647.0h2v43.5h-2zM335 647.0h2v43.5h-2zM339 675.6h1v14.9h-1zM346 675.6h2v14.9h-2zM348 630.0h1v60.5h-1zM352 663.7h2v26.8h-2zM354 647.0h1v43.5h-1zM355 675.6h1v14.9h-1zM357 675.6h2v14.9h-2zM359 675.6h1v14.9h-1zM362 675.6h4v14.9h-4zM366 675.6h1v14.9h-1zM368 675.6h1v14.9h-1zM372 647.0h1v43.5h-1zM377 630.0h1v60.5h-1zM378 663.7h1v26.8h-1zM385 663.7h2v26.8h-2zM391 663.7h3v26.8h-3zM394 663.7h1v26.8h-1zM395 647.0h1v43.5h-1zM397 663.7h1v26.8h-1zM398 675.6h2v14.9h-2zM400 647.0h2v43.5h-2zM402 663.7h3v26.8h-3zM406 663.7h2v26.8h-2zM411 630.0h1v60.5h-1zM412 647.0h1v43.5h-1zM413 675.6h3v14.9h-3zM418 675.6h1v14.9h-1zM422 675.6h1v14.9h-1zM426 675.6h1v14.9h-1zM427 663.7h1v26.8h-1zM429 675.6h1v14.9h-1zM430 618.0h2v72.5h-2zM433 675.6h2v14.9h-2zM435 630.0h3v60.5h-3zM438 663.7h1v26.8h-1zM439 663.7h1v26.8h-1zM440 630.0h1v60.5h-1zM441 675.6h1v14.9h-1zM442 618.0h1v72.5h-1zM444 663.7h1v26.8h-1zM446 630.0h1v60.5h-1zM447 647.0h1v43.5h-1zM448 647.0h2v43.5h-2zM450 618.0h1v72.5h-1zM451 675.6h1v14.9h-1zM457 663.7h2v26.8h-2zM459 663.7h1v26.8h-1zM460 663.7h1v26.8h-1zM461 630.0h2v60.5h-2zM465 663.7h1v26.8h-1zM466 663.7h1v26.8h-1zM469 675.6h1v14.9h-1z"/><path fill="url(#g401)" d="M96 663.7h1v26.8h-1zM98 647.0h1v43.5h-1zM172 675.6h2v14.9h-2zM178 675.6h3v14.9h-3zM188 663.7h2v26.8h-2zM195 663.7h1v26.8h-1zM197 663.7h2v26.8h-2zM201 630.0h1v60.5h-1zM203 647.0h1v43.5h-1zM204 663.7h3v26.8h-3zM213 663.7h2v26.8h-2zM215 663.7h3v26.8h-3zM220 675.6h3v14.9h-3zM235 675.6h1v14.9h-1zM253 663.7h3v26.8h-3zM258 647.0h1v43.5h-1zM263 647.0h1v43.5h-1zM267 675.6h1v14.9h-1zM270 663.7h4v26.8h-4zM274 663.7h3v26.8h-3zM278 675.6h2v14.9h-2zM289 663.7h1v26.8h-1zM297 630.0h1v60.5h-1zM303 663.7h1v26.8h-1zM304 630.0h1v60.5h-1zM305 663.7h1v26.8h-1zM306 663.7h2v26.8h-2zM308 630.0h1v60.5h-1zM329 647.0h1v43.5h-1zM330 663.7h1v26.8h-1zM331 647.0h2v43.5h-2zM340 675.6h2v14.9h-2zM343 675.6h2v14.9h-2zM349 618.0h3v72.5h-3zM360 675.6h2v14.9h-2zM379 663.7h2v26.8h-2zM383 663.7h1v26.8h-1zM387 647.0h1v43.5h-1zM389 647.0h2v43.5h-2zM405 618.0h1v72.5h-1zM408 663.7h3v26.8h-3zM419 675.6h2v14.9h-2zM423 675.6h1v14.9h-1zM424 630.0h2v60.5h-2zM445 675.6h1v14.9h-1zM467 675.6h1v14.9h-1z"/><path fill="url(#g402)" d="M97 675.6h1v14.9h-1zM110 618.0h2v72.5h-2zM116 647.0h3v43.5h-3zM119 675.6h1v14.9h-1zM139 647.0h2v43.5h-2zM145 663.7h3v26.8h-3zM164 675.6h4v14.9h-4zM191 663.7h1v26.8h-1zM194 663.7h1v26.8h-1zM202 663.7h1v26.8h-1zM208 663.7h3v26.8h-3zM218 663.7h2v26.8h-2zM226 675.6h3v14.9h-3zM248 647.0h1v43.5h-1zM250 663.7h1v26.8h-1zM259 663.7h1v26.8h-1zM264 675.6h1v14.9h-1zM266 663.7h1v26.8h-1zM284 663.7h1v26.8h-1zM290 663.7h1v26.8h-1zM292 663.7h1v26.8h-1zM298 663.7h1v26.8h-1zM299 663.7h3v26.8h-3zM313 675.6h2v14.9h-2zM324 663.7h2v26.8h-2zM326 630.0h3v60.5h-3zM338 675.6h1v14.9h-1zM342 675.6h1v14.9h-1zM356 675.6h1v14.9h-1zM369 663.7h3v26.8h-3zM374 663.7h3v26.8h-3zM381 663.7h2v26.8h-2zM384 647.0h1v43.5h-1zM388 630.0h1v60.5h-1zM416 675.6h1v14.9h-1zM417 675.6h1v14.9h-1zM421 675.6h1v14.9h-1zM443 618.0h1v72.5h-1z"/><path fill="url(#g410)" d="M475 663.7h3v26.8h-3zM478 675.6h1v14.9h-1zM479 663.7h1v26.8h-1zM483 675.6h3v14.9h-3zM492 663.7h1v26.8h-1zM493 647.0h1v43.5h-1zM494 647.0h1v43.5h-1zM496 675.6h1v14.9h-1zM501 675.6h2v14.9h-2zM507 663.7h4v26.8h-4zM520 647.0h1v43.5h-1zM523 663.7h1v26.8h-1zM524 663.7h1v26.8h-1zM526 663.7h1v26.8h-1zM531 618.0h2v72.5h-2zM534 630.0h1v60.5h-1zM547 663.7h2v26.8h-2zM549 630.0h3v60.5h-3zM552 663.7h2v26.8h-2zM555 675.6h1v14.9h-1zM560 663.7h1v26.8h-1zM563 675.6h1v14.9h-1zM571 663.7h2v26.8h-2zM574 647.0h1v43.5h-1zM592 675.6h2v14.9h-2zM597 663.7h2v26.8h-2zM611 647.0h2v43.5h-2zM613 675.6h1v14.9h-1zM619 675.6h1v14.9h-1zM625 618.0h2v72.5h-2zM627 675.6h3v14.9h-3zM630 663.7h1v26.8h-1zM634 663.7h1v26.8h-1zM636 675.6h2v14.9h-2zM638 663.7h2v26.8h-2zM654 630.0h1v60.5h-1zM666 647.0h1v43.5h-1zM667 675.6h1v14.9h-1zM674 663.7h2v26.8h-2zM681 663.7h1v26.8h-1zM682 663.7h2v26.8h-2zM686 663.7h1v26.8h-1zM687 675.6h1v14.9h-1zM689 663.7h3v26.8h-3zM694 675.6h1v14.9h-1zM695 675.6h1v14.9h-1zM696 675.6h2v14.9h-2zM706 647.0h2v43.5h-2zM713 663.7h1v26.8h-1zM727 618.0h1v72.5h-1zM730 675.6h1v14.9h-1zM735 675.6h1v14.9h-1zM743 675.6h1v14.9h-1zM747 675.6h2v14.9h-2zM749 663.7h1v26.8h-1zM750 663.7h1v26.8h-1zM757 647.0h2v43.5h-2zM761 663.7h3v26.8h-3zM764 675.6h3v14.9h-3zM778 647.0h1v43.5h-1zM794 663.7h1v26.8h-1zM801 663.7h2v26.8h-2zM803 675.6h2v14.9h-2zM805 647.0h2v43.5h-2zM807 675.6h1v14.9h-1zM809 675.6h1v14.9h-1zM814 675.6h1v14.9h-1zM821 675.6h1v14.9h-1zM822 663.7h2v26.8h-2zM835 630.0h1v60.5h-1zM836 618.0h1v72.5h-1zM841 675.6h1v14.9h-1zM848 630.0h1v60.5h-1zM850 618.0h1v72.5h-1zM851 675.6h2v14.9h-2zM854 663.7h1v26.8h-1zM858 663.7h1v26.8h-1zM863 647.0h1v43.5h-1zM870 663.7h2v26.8h-2zM883 663.7h2v26.8h-2zM910 663.7h1v26.8h-1zM920 675.6h2v14.9h-2zM923 663.7h1v26.8h-1zM924 663.7h1v26.8h-1zM925 675.6h1v14.9h-1zM926 675.6h1v14.9h-1zM940 630.0h3v60.5h-3zM943 675.6h1v14.9h-1zM946 663.7h2v26.8h-2zM948 630.0h1v60.5h-1zM956 663.7h2v26.8h-2zM959 663.7h1v26.8h-1zM963 675.6h2v14.9h-2zM989 675.6h3v14.9h-3zM1002 663.7h3v26.8h-3zM1009 663.7h1v26.8h-1zM1014 675.6h2v14.9h-2zM1016 663.7h3v26.8h-3zM1025 675.6h2v14.9h-2zM1030 647.0h1v43.5h-1zM1034 630.0h2v60.5h-2zM1039 663.7h1v26.8h-1zM1040 663.7h1v26.8h-1zM1047 663.7h1v26.8h-1zM1048 675.6h1v14.9h-1zM1061 675.6h1v14.9h-1zM1066 675.6h1v14.9h-1zM1069 647.0h2v43.5h-2zM1076 663.7h1v26.8h-1zM1077 675.6h1v14.9h-1zM96 618.0h1v12.0h-1zM99 605.0h1v13.0h-1zM99 552.0h1v28.0h-1zM103 618.0h1v29.0h-1zM103 527.0h1v25.0h-1zM110 540.0h1v40.0h-1zM114 527.0h1v57.0h-1zM116 580.0h3v4.0h-3zM120 552.0h1v32.0h-1zM121 552.0h1v7.0h-1zM122 552.0h2v7.0h-2zM124 630.0h1v17.0h-1zM124 559.0h1v21.0h-1zM127 580.0h1v25.0h-1zM136 630.0h1v17.0h-1zM141 584.0h1v21.0h-1zM147 552.0h1v32.0h-1zM148 605.0h1v13.0h-1zM152 559.0h1v21.0h-1zM153 584.0h1v21.0h-1zM159 630.0h1v17.0h-1zM167 527.0h2v13.0h-2zM172 552.0h1v32.0h-1zM174 618.0h1v29.0h-1zM174 540.0h1v12.0h-1zM178 527.0h2v13.0h-2zM180 584.0h2v21.0h-2zM184 584.0h1v21.0h-1zM185 605.0h1v13.0h-1zM186 540.0h2v40.0h-2zM188 580.0h1v4.0h-1zM196 580.0h1v4.0h-1zM197 552.0h1v7.0h-1zM199 552.0h1v7.0h-1zM200 580.0h1v4.0h-1zM202 605.0h1v13.0h-1zM202 580.0h1v4.0h-1zM207 552.0h1v7.0h-1zM220 618.0h3v29.0h-3zM220 514.0h3v45.0h-3zM224 552.0h2v7.0h-2zM227 605.0h1v25.0h-1zM232 552.0h1v7.0h-1zM233 559.0h1v21.0h-1zM239 527.0h1v13.0h-1zM240 559.0h2v21.0h-2zM245 584.0h1v21.0h-1zM251 605.0h1v13.0h-1zM254 552.0h1v7.0h-1zM255 580.0h1v4.0h-1zM257 584.0h1v46.0h-1zM260 527.0h1v13.0h-1zM262 552.0h1v7.0h-1zM273 559.0h1v21.0h-1zM274 580.0h1v4.0h-1zM276 584.0h1v21.0h-1zM277 584.0h1v21.0h-1zM278 630.0h1v17.0h-1zM279 552.0h1v7.0h-1zM283 584.0h1v21.0h-1zM285 540.0h1v19.0h-1zM286 540.0h2v65.0h-2zM291 580.0h1v25.0h-1zM296 584.0h1v21.0h-1zM303 552.0h2v7.0h-2zM305 552.0h1v7.0h-1zM308 552.0h1v28.0h-1zM309 527.0h2v25.0h-2zM314 630.0h1v17.0h-1zM315 605.0h1v13.0h-1zM322 580.0h1v4.0h-1zM333 605.0h1v13.0h-1zM333 552.0h1v32.0h-1zM344 580.0h1v4.0h-1zM345 552.0h1v32.0h-1zM345 527.0h1v13.0h-1zM346 552.0h2v7.0h-2zM353 559.0h1v25.0h-1zM354 540.0h1v12.0h-1zM356 584.0h1v21.0h-1zM364 584.0h1v21.0h-1zM368 552.0h1v28.0h-1zM373 540.0h1v12.0h-1zM375 580.0h1v4.0h-1zM377 540.0h1v12.0h-1zM382 618.0h1v12.0h-1zM392 580.0h1v25.0h-1zM396 580.0h1v38.0h-1zM396 540.0h1v12.0h-1zM402 630.0h2v17.0h-2zM404 580.0h1v4.0h-1zM405 552.0h1v28.0h-1zM408 584.0h2v21.0h-2zM418 605.0h1v13.0h-1zM419 540.0h2v78.0h-2zM422 540.0h1v19.0h-1zM425 559.0h1v46.0h-1zM426 552.0h1v7.0h-1zM427 580.0h1v25.0h-1zM431 552.0h2v53.0h-2zM438 552.0h1v7.0h-1zM440 605.0h1v25.0h-1zM442 584.0h1v21.0h-1zM443 605.0h2v25.0h-2zM445 552.0h1v7.0h-1zM447 618.0h1v12.0h-1zM447 527.0h1v25.0h-1zM455 618.0h1v12.0h-1zM456 630.0h1v17.0h-1zM457 552.0h1v7.0h-1zM458 630.0h3v17.0h-3zM462 559.0h1v25.0h-1zM469 584.0h1v34.0h-1zM474 580.0h1v4.0h-1zM477 630.0h1v17.0h-1zM483 605.0h1v42.0h-1zM487 552.0h1v7.0h-1zM488 540.0h1v19.0h-1zM489 605.0h1v13.0h-1zM489 559.0h1v21.0h-1zM489 527.0h1v13.0h-1zM490 584.0h2v21.0h-2zM501 540.0h1v40.0h-1zM503 580.0h1v4.0h-1zM507 584.0h1v21.0h-1zM509 605.0h1v13.0h-1zM512 580.0h1v4.0h-1zM513 527.0h3v13.0h-3zM516 552.0h1v7.0h-1zM519 580.0h1v25.0h-1zM522 580.0h1v4.0h-1zM527 552.0h1v7.0h-1zM528 552.0h1v7.0h-1zM529 630.0h1v17.0h-1zM533 580.0h1v25.0h-1zM540 580.0h3v4.0h-3zM543 514.0h1v13.0h-1zM551 552.0h1v32.0h-1zM556 540.0h1v12.0h-1zM558 618.0h2v12.0h-2zM560 514.0h1v45.0h-1zM561 552.0h3v28.0h-3zM574 552.0h1v7.0h-1zM581 552.0h1v7.0h-1zM582 527.0h1v32.0h-1zM584 552.0h1v32.0h-1zM587 580.0h1v4.0h-1zM587 552.0h1v7.0h-1zM591 580.0h1v25.0h-1zM597 552.0h1v32.0h-1zM602 552.0h1v7.0h-1zM609 580.0h1v4.0h-1zM611 559.0h1v21.0h-1zM614 552.0h2v28.0h-2zM616 618.0h1v29.0h-1zM617 580.0h1v4.0h-1zM622 552.0h1v7.0h-1zM623 584.0h1v21.0h-1zM623 514.0h1v13.0h-1zM629 559.0h1v25.0h-1zM633 584.0h2v21.0h-2zM641 630.0h2v17.0h-2zM648 552.0h1v7.0h-1zM649 552.0h1v7.0h-1zM651 580.0h1v25.0h-1zM653 630.0h2v17.0h-2zM663 552.0h2v7.0h-2zM665 552.0h1v7.0h-1zM666 552.0h1v7.0h-1zM667 540.0h1v19.0h-1zM670 540.0h1v12.0h-1zM674 552.0h1v7.0h-1zM675 540.0h1v12.0h-1zM683 540.0h2v19.0h-2zM685 559.0h2v21.0h-2zM697 605.0h1v13.0h-1zM697 559.0h1v25.0h-1zM699 559.0h2v25.0h-2zM706 605.0h1v13.0h-1zM709 618.0h1v29.0h-1zM711 630.0h1v17.0h-1zM712 540.0h1v12.0h-1zM713 552.0h2v7.0h-2zM716 527.0h1v53.0h-1zM721 540.0h1v19.0h-1zM722 552.0h2v32.0h-2zM724 559.0h1v21.0h-1zM727 618.0h1v12.0h-1zM727 527.0h1v13.0h-1zM731 580.0h1v4.0h-1zM735 559.0h1v25.0h-1zM741 552.0h1v7.0h-1zM741 527.0h1v13.0h-1zM746 584.0h1v21.0h-1zM750 552.0h2v53.0h-2zM752 514.0h1v26.0h-1zM753 559.0h1v25.0h-1zM754 630.0h1v17.0h-1zM759 580.0h2v25.0h-2zM764 552.0h1v28.0h-1zM773 514.0h1v91.0h-1zM775 605.0h1v13.0h-1zM775 552.0h1v32.0h-1zM784 527.0h1v57.0h-1zM786 552.0h2v28.0h-2zM788 618.0h2v12.0h-2zM791 527.0h1v13.0h-1zM795 552.0h1v28.0h-1zM796 552.0h1v7.0h-1zM799 580.0h1v4.0h-1zM805 580.0h2v4.0h-2zM810 580.0h1v4.0h-1zM812 552.0h3v7.0h-3zM815 540.0h1v12.0h-1zM816 584.0h2v34.0h-2zM820 540.0h2v40.0h-2zM823 552.0h1v53.0h-1zM825 580.0h2v25.0h-2zM832 514.0h1v26.0h-1zM839 552.0h1v7.0h-1zM840 630.0h2v17.0h-2zM840 540.0h2v44.0h-2zM844 552.0h1v7.0h-1zM850 559.0h1v46.0h-1zM851 527.0h3v25.0h-3zM855 540.0h3v12.0h-3zM862 552.0h1v7.0h-1zM863 514.0h1v45.0h-1zM864 584.0h1v21.0h-1zM866 559.0h2v21.0h-2zM868 559.0h1v21.0h-1zM871 584.0h1v21.0h-1zM872 605.0h1v13.0h-1zM873 559.0h1v25.0h-1zM878 552.0h2v7.0h-2zM880 605.0h1v13.0h-1zM882 552.0h1v7.0h-1zM883 552.0h2v7.0h-2zM887 618.0h1v29.0h-1zM889 559.0h1v21.0h-1zM891 580.0h1v4.0h-1zM894 552.0h1v32.0h-1zM900 584.0h2v63.0h-2zM902 552.0h2v32.0h-2zM904 580.0h1v25.0h-1zM906 618.0h1v12.0h-1zM906 552.0h1v28.0h-1zM908 552.0h1v7.0h-1zM908 527.0h1v13.0h-1zM913 580.0h1v4.0h-1zM913 552.0h1v7.0h-1zM914 552.0h1v7.0h-1zM922 630.0h2v17.0h-2zM925 580.0h1v4.0h-1zM928 580.0h1v4.0h-1zM932 552.0h1v28.0h-1zM933 580.0h1v4.0h-1zM942 630.0h2v17.0h-2zM945 605.0h2v13.0h-2zM945 527.0h2v13.0h-2zM948 552.0h1v28.0h-1zM950 605.0h1v13.0h-1zM954 540.0h1v44.0h-1zM955 552.0h1v7.0h-1zM960 527.0h1v32.0h-1zM968 552.0h2v32.0h-2zM975 559.0h1v21.0h-1zM978 630.0h1v17.0h-1zM1000 552.0h1v53.0h-1zM1001 559.0h2v21.0h-2zM1006 580.0h3v4.0h-3zM1011 580.0h1v4.0h-1zM1012 630.0h1v17.0h-1zM1015 540.0h1v12.0h-1zM1021 584.0h1v34.0h-1zM1021 552.0h1v28.0h-1zM1023 552.0h1v7.0h-1zM1029 580.0h2v25.0h-2zM1038 559.0h1v25.0h-1zM1039 584.0h1v21.0h-1zM1040 584.0h1v34.0h-1zM1040 552.0h1v7.0h-1zM1044 584.0h1v21.0h-1zM1051 540.0h1v12.0h-1zM1053 618.0h1v12.0h-1zM1053 540.0h1v12.0h-1zM1063 580.0h1v25.0h-1zM1064 540.0h1v12.0h-1zM1069 552.0h1v7.0h-1z"/><path fill="url(#g411)" d="M480 647.0h1v43.5h-1zM490 663.7h2v26.8h-2zM497 663.7h1v26.8h-1zM512 663.7h4v26.8h-4zM521 663.7h1v26.8h-1zM541 663.7h4v26.8h-4zM546 630.0h1v60.5h-1zM554 663.7h1v26.8h-1zM564 663.7h2v26.8h-2zM577 675.6h3v14.9h-3zM590 663.7h2v26.8h-2zM600 630.0h2v60.5h-2zM602 663.7h3v26.8h-3zM609 663.7h1v26.8h-1zM617 663.7h1v26.8h-1zM623 663.7h2v26.8h-2zM645 675.6h4v14.9h-4zM649 663.7h4v26.8h-4zM662 675.6h3v14.9h-3zM668 647.0h1v43.5h-1zM673 647.0h1v43.5h-1zM688 663.7h1v26.8h-1zM702 675.6h1v14.9h-1zM704 675.6h1v14.9h-1zM714 647.0h2v43.5h-2zM716 630.0h2v60.5h-2zM722 663.7h1v26.8h-1zM731 675.6h2v14.9h-2zM733 663.7h1v26.8h-1zM744 675.6h2v14.9h-2zM752 675.6h3v14.9h-3zM759 663.7h2v26.8h-2zM772 675.6h1v14.9h-1zM776 663.7h2v26.8h-2zM780 663.7h2v26.8h-2zM791 675.6h1v14.9h-1zM797 675.6h1v14.9h-1zM810 675.6h1v14.9h-1zM827 663.7h3v26.8h-3zM849 663.7h1v26.8h-1zM861 663.7h1v26.8h-1zM865 663.7h1v26.8h-1zM873 675.6h1v14.9h-1zM911 675.6h2v14.9h-2zM913 663.7h1v26.8h-1zM932 675.6h3v14.9h-3zM936 663.7h1v26.8h-1zM937 675.6h2v14.9h-2zM954 647.0h1v43.5h-1zM973 663.7h1v26.8h-1zM985 663.7h4v26.8h-4zM997 663.7h1v26.8h-1zM1007 663.7h2v26.8h-2zM1012 630.0h1v60.5h-1zM1031 675.6h2v14.9h-2zM1033 675.6h1v14.9h-1zM1037 663.7h2v26.8h-2zM1049 647.0h1v43.5h-1zM1050 675.6h1v14.9h-1zM1057 675.6h1v14.9h-1zM103 580.0h1v25.0h-1zM104 552.0h1v7.0h-1zM105 584.0h1v21.0h-1zM135 552.0h1v7.0h-1zM135 527.0h1v13.0h-1zM142 540.0h1v40.0h-1zM145 552.0h1v32.0h-1zM150 559.0h1v46.0h-1zM151 552.0h1v7.0h-1zM152 630.0h1v17.0h-1zM155 552.0h1v7.0h-1zM169 559.0h1v21.0h-1zM171 630.0h1v17.0h-1zM171 559.0h1v21.0h-1zM183 540.0h1v40.0h-1zM189 605.0h1v13.0h-1zM191 559.0h1v46.0h-1zM197 584.0h1v21.0h-1zM205 559.0h1v46.0h-1zM210 605.0h1v13.0h-1zM230 527.0h1v13.0h-1zM233 584.0h1v21.0h-1zM234 552.0h1v28.0h-1zM244 630.0h1v17.0h-1zM246 540.0h1v44.0h-1zM259 540.0h1v12.0h-1zM263 584.0h1v21.0h-1zM264 580.0h1v4.0h-1zM270 605.0h2v13.0h-2zM273 540.0h1v12.0h-1zM301 559.0h1v25.0h-1zM305 580.0h1v4.0h-1zM318 552.0h1v7.0h-1zM323 584.0h2v21.0h-2zM325 552.0h1v7.0h-1zM328 552.0h1v28.0h-1zM376 605.0h1v42.0h-1zM376 552.0h1v7.0h-1zM383 618.0h2v29.0h-2zM397 580.0h1v25.0h-1zM399 584.0h1v21.0h-1zM416 580.0h1v25.0h-1zM427 540.0h1v12.0h-1zM435 527.0h1v25.0h-1zM445 580.0h1v4.0h-1zM463 559.0h1v46.0h-1zM464 580.0h1v4.0h-1zM466 540.0h1v12.0h-1zM470 618.0h1v12.0h-1zM475 559.0h1v21.0h-1zM477 580.0h1v4.0h-1zM481 584.0h1v21.0h-1zM485 552.0h1v7.0h-1zM487 605.0h1v13.0h-1zM493 584.0h1v21.0h-1zM495 584.0h1v46.0h-1zM495 552.0h1v7.0h-1zM500 552.0h1v7.0h-1zM503 618.0h1v29.0h-1zM509 552.0h1v7.0h-1zM511 527.0h1v25.0h-1zM521 514.0h1v26.0h-1zM534 552.0h3v7.0h-3zM544 580.0h2v25.0h-2zM571 552.0h1v7.0h-1zM572 514.0h1v13.0h-1zM579 630.0h2v17.0h-2zM585 584.0h1v21.0h-1zM590 630.0h1v17.0h-1zM591 527.0h1v13.0h-1zM598 527.0h1v13.0h-1zM607 527.0h1v32.0h-1zM620 559.0h1v21.0h-1zM635 580.0h1v4.0h-1zM635 552.0h1v7.0h-1zM646 527.0h2v13.0h-2zM666 584.0h1v21.0h-1zM692 580.0h1v25.0h-1zM696 618.0h1v12.0h-1zM706 580.0h1v4.0h-1zM710 605.0h1v13.0h-1zM710 552.0h1v28.0h-1zM718 630.0h1v17.0h-1zM719 559.0h2v21.0h-2zM728 584.0h1v34.0h-1zM729 580.0h1v4.0h-1zM730 559.0h1v21.0h-1zM735 630.0h1v17.0h-1zM772 580.0h1v4.0h-1zM781 552.0h1v32.0h-1zM782 527.0h1v25.0h-1zM790 580.0h1v4.0h-1zM796 580.0h1v4.0h-1zM797 552.0h2v53.0h-2zM803 552.0h1v7.0h-1zM818 580.0h1v25.0h-1zM819 584.0h1v34.0h-1zM832 580.0h1v38.0h-1zM835 630.0h1v17.0h-1zM865 540.0h1v65.0h-1zM875 580.0h1v25.0h-1zM877 580.0h1v38.0h-1zM878 580.0h2v4.0h-2zM881 527.0h1v25.0h-1zM887 552.0h1v32.0h-1zM888 552.0h1v7.0h-1zM892 630.0h2v17.0h-2zM894 618.0h1v12.0h-1zM897 552.0h1v7.0h-1zM911 552.0h1v7.0h-1zM915 584.0h1v21.0h-1zM921 552.0h1v7.0h-1zM936 580.0h2v4.0h-2zM944 630.0h1v17.0h-1zM947 580.0h1v4.0h-1zM961 584.0h2v21.0h-2zM963 552.0h1v28.0h-1zM967 584.0h1v21.0h-1zM970 559.0h1v21.0h-1zM971 552.0h1v7.0h-1zM972 559.0h1v21.0h-1zM976 630.0h1v17.0h-1zM993 580.0h1v4.0h-1zM1015 559.0h1v21.0h-1zM1018 552.0h2v7.0h-2zM1024 630.0h2v17.0h-2zM1032 559.0h1v46.0h-1zM1035 559.0h1v25.0h-1zM1055 618.0h1v12.0h-1zM1055 559.0h1v21.0h-1zM1069 527.0h1v13.0h-1zM1070 552.0h1v32.0h-1zM1071 605.0h1v25.0h-1zM1075 618.0h1v12.0h-1zM1076 559.0h1v46.0h-1zM1078 584.0h2v21.0h-2z"/><path fill="url(#g412)" d="M473 663.7h2v26.8h-2zM499 675.6h1v14.9h-1zM500 675.6h1v14.9h-1zM503 675.6h1v14.9h-1zM516 675.6h1v14.9h-1zM517 675.6h1v14.9h-1zM525 663.7h1v26.8h-1zM528 675.6h2v14.9h-2zM556 663.7h3v26.8h-3zM569 663.7h2v26.8h-2zM581 663.7h4v26.8h-4zM585 675.6h1v14.9h-1zM595 675.6h1v14.9h-1zM620 663.7h2v26.8h-2zM661 647.0h1v43.5h-1zM672 675.6h1v14.9h-1zM679 618.0h1v72.5h-1zM680 675.6h1v14.9h-1zM684 663.7h1v26.8h-1zM710 663.7h3v26.8h-3zM718 663.7h3v26.8h-3zM723 663.7h3v26.8h-3zM728 663.7h2v26.8h-2zM734 675.6h1v14.9h-1zM738 663.7h2v26.8h-2zM751 663.7h1v26.8h-1zM767 663.7h3v26.8h-3zM779 663.7h1v26.8h-1zM799 647.0h2v43.5h-2zM816 647.0h4v43.5h-4zM824 647.0h3v43.5h-3zM830 647.0h3v43.5h-3zM840 630.0h1v60.5h-1zM845 647.0h2v43.5h-2zM855 675.6h3v14.9h-3zM859 663.7h2v26.8h-2zM866 663.7h3v26.8h-3zM874 647.0h1v43.5h-1zM885 663.7h3v26.8h-3zM895 647.0h2v43.5h-2zM917 675.6h3v14.9h-3zM939 647.0h1v43.5h-1zM955 663.7h1v26.8h-1zM960 675.6h3v14.9h-3zM974 663.7h1v26.8h-1zM1013 663.7h1v26.8h-1zM1023 663.7h1v26.8h-1zM1024 675.6h1v14.9h-1zM1041 663.7h2v26.8h-2zM1053 675.6h1v14.9h-1zM1073 663.7h1v26.8h-1zM96 552.0h1v7.0h-1zM101 618.0h2v29.0h-2zM106 559.0h1v46.0h-1zM113 540.0h1v40.0h-1zM126 552.0h1v7.0h-1zM132 584.0h1v21.0h-1zM135 618.0h1v12.0h-1zM141 552.0h1v7.0h-1zM142 514.0h1v13.0h-1zM147 618.0h1v29.0h-1zM148 540.0h1v19.0h-1zM151 605.0h1v42.0h-1zM157 618.0h2v29.0h-2zM161 540.0h1v40.0h-1zM162 580.0h1v4.0h-1zM164 559.0h2v21.0h-2zM170 605.0h1v13.0h-1zM175 559.0h1v25.0h-1zM183 618.0h1v12.0h-1zM185 630.0h1v17.0h-1zM190 559.0h1v25.0h-1zM199 618.0h1v29.0h-1zM200 618.0h1v29.0h-1zM206 580.0h1v25.0h-1zM209 552.0h1v7.0h-1zM212 514.0h1v13.0h-1zM220 580.0h3v25.0h-3zM254 584.0h1v21.0h-1zM258 618.0h1v12.0h-1zM261 580.0h1v4.0h-1zM262 584.0h1v21.0h-1zM265 552.0h1v7.0h-1zM266 552.0h1v28.0h-1zM272 552.0h1v7.0h-1zM278 559.0h1v46.0h-1zM283 552.0h1v7.0h-1zM284 559.0h1v21.0h-1zM299 630.0h2v17.0h-2zM299 540.0h2v19.0h-2zM313 540.0h1v19.0h-1zM315 540.0h1v12.0h-1zM326 552.0h1v7.0h-1zM329 605.0h2v42.0h-2zM331 605.0h1v13.0h-1zM332 552.0h1v28.0h-1zM334 552.0h2v28.0h-2zM337 630.0h1v17.0h-1zM338 559.0h2v59.0h-2zM341 605.0h2v13.0h-2zM357 559.0h1v21.0h-1zM372 580.0h1v25.0h-1zM378 559.0h1v25.0h-1zM387 540.0h1v12.0h-1zM388 580.0h3v4.0h-3zM391 552.0h1v32.0h-1zM391 514.0h1v13.0h-1zM400 552.0h2v7.0h-2zM415 584.0h1v21.0h-1zM421 605.0h1v13.0h-1zM428 584.0h3v21.0h-3zM428 540.0h3v19.0h-3zM445 605.0h1v42.0h-1zM447 584.0h1v21.0h-1zM449 580.0h1v25.0h-1zM455 527.0h1v32.0h-1zM461 559.0h1v46.0h-1zM469 527.0h1v13.0h-1zM470 552.0h1v7.0h-1zM473 527.0h1v57.0h-1zM496 630.0h1v17.0h-1zM507 527.0h1v13.0h-1zM512 540.0h1v19.0h-1zM517 584.0h2v21.0h-2zM521 552.0h1v7.0h-1zM522 552.0h1v7.0h-1zM523 630.0h1v17.0h-1zM527 580.0h1v4.0h-1zM527 514.0h1v26.0h-1zM538 540.0h1v12.0h-1zM555 580.0h1v4.0h-1zM557 552.0h1v7.0h-1zM558 540.0h2v12.0h-2zM575 580.0h1v4.0h-1zM578 605.0h1v13.0h-1zM588 527.0h1v13.0h-1zM590 559.0h1v46.0h-1zM597 605.0h1v25.0h-1zM605 559.0h2v21.0h-2zM608 605.0h1v13.0h-1zM610 552.0h1v32.0h-1zM616 559.0h1v25.0h-1zM618 552.0h1v28.0h-1zM622 630.0h1v17.0h-1zM625 552.0h1v7.0h-1zM626 559.0h1v25.0h-1zM628 559.0h1v46.0h-1zM666 618.0h1v12.0h-1zM675 580.0h1v4.0h-1zM676 584.0h1v21.0h-1zM677 584.0h2v21.0h-2zM679 559.0h1v25.0h-1zM680 514.0h3v13.0h-3zM688 527.0h1v13.0h-1zM694 580.0h1v4.0h-1zM712 618.0h1v12.0h-1zM725 552.0h1v32.0h-1zM726 584.0h1v21.0h-1zM730 584.0h1v21.0h-1zM730 540.0h1v12.0h-1zM736 559.0h1v25.0h-1zM737 559.0h1v25.0h-1zM742 580.0h1v25.0h-1zM750 618.0h2v29.0h-2zM752 605.0h1v13.0h-1zM752 580.0h1v4.0h-1zM755 618.0h2v12.0h-2zM758 552.0h1v7.0h-1zM765 552.0h3v7.0h-3zM796 630.0h1v17.0h-1zM802 559.0h1v25.0h-1zM815 580.0h1v4.0h-1zM823 630.0h1v17.0h-1zM825 540.0h2v12.0h-2zM845 514.0h1v45.0h-1zM846 580.0h2v25.0h-2zM858 540.0h2v19.0h-2zM861 559.0h1v21.0h-1zM868 630.0h1v17.0h-1zM868 584.0h1v21.0h-1zM871 618.0h1v12.0h-1zM876 580.0h1v4.0h-1zM896 552.0h1v28.0h-1zM907 580.0h1v50.0h-1zM912 584.0h1v21.0h-1zM922 540.0h2v12.0h-2zM939 540.0h1v12.0h-1zM940 630.0h1v17.0h-1zM947 540.0h1v19.0h-1zM948 630.0h1v17.0h-1zM950 552.0h1v7.0h-1zM951 618.0h1v12.0h-1zM965 540.0h1v12.0h-1zM966 584.0h1v21.0h-1zM973 552.0h1v7.0h-1zM976 552.0h1v7.0h-1zM978 552.0h1v7.0h-1zM982 584.0h1v34.0h-1zM993 552.0h1v7.0h-1zM994 584.0h1v21.0h-1zM996 605.0h1v13.0h-1zM997 559.0h1v25.0h-1zM1004 552.0h1v28.0h-1zM1009 559.0h2v25.0h-2zM1012 580.0h1v4.0h-1zM1013 584.0h1v21.0h-1zM1018 580.0h2v38.0h-2zM1020 527.0h1v32.0h-1zM1028 552.0h1v7.0h-1zM1033 559.0h1v25.0h-1zM1047 605.0h2v13.0h-2zM1052 552.0h1v32.0h-1zM1056 584.0h1v46.0h-1zM1060 540.0h2v19.0h-2zM1062 580.0h1v25.0h-1z"/>
<path d="M136.5 687.5V691.0M177.5 687.5V691.0M218.5 687.5V691.0M259.5 687.5V691.0M300.5 687.5V691.0M341.5 687.5V691.0M382.5 687.5V691.0M423.5 687.5V691.0M464.5 687.5V691.0M505.5 687.5V691.0M546.5 687.5V691.0M587.5 687.5V691.0M628.5 687.5V691.0M669.5 687.5V691.0M710.5 687.5V691.0M752.5 687.5V691.0M793.5 687.5V691.0M834.5 687.5V691.0M875.5 687.5V691.0M916.5 687.5V691.0M957.5 687.5V691.0M998.5 687.5V691.0M1039.5 687.5V691.0" stroke="#383838" stroke-width="1" fill="none"/>
<path d="M91.0 686.5H95.0M91.0 680.5H95.0M91.0 675.5H95.0M91.0 671.5H95.0M91.0 667.5H95.0M91.0 664.5H95.0M91.0 661.5H95.0M87.0 659.5H95.0M91.0 643.5H95.0M91.0 634.5H95.0M91.0 628.5H95.0M91.0 622.5H95.0M91.0 618.5H95.0M91.0 615.5H95.0M91.0 612.5H95.0M91.0 609.5H95.0M87.0 607.5H95.0M91.0 591.5H95.0M91.0 582.5H95.0M91.0 575.5H95.0M91.0 570.5H95.0M91.0 566.5H95.0M91.0 563.5H95.0M91.0 559.5H95.0M91.0 557.5H95.0M87.0 554.5H95.0M91.0 539.5H95.0M91.0 529.5H95.0M91.0 523.5H95.0M91.0 518.5H95.0M91.0 514.5H95.0" stroke="#2a2a2a" stroke-width="1" fill="none"/>
<text x="82.3" y="561.8" text-anchor="end" font-size="12">10<tspan dy="-6.1">4</tspan></text>
<text x="82.3" y="614.1" text-anchor="end" font-size="12">10<tspan dy="-6.1">3</tspan></text>
<text x="82.3" y="666.4" text-anchor="end" font-size="12">10<tspan dy="-6.1">2</tspan></text>
<text x="50" y="602" text-anchor="middle" font-size="12" textLength="71.5" lengthAdjust="spacingAndGlyphs" transform="rotate(-90 50 602)">Energy (keV)</text>
<text x="9.5" y="537" text-anchor="start" font-size="12" textLength="65" lengthAdjust="spacingAndGlyphs">LEMMS Ions</text>
<rect x="1092" y="515" width="12.5" height="176.4" fill="url(#cb)"/>
<path d="M1104.5 515V691.4" stroke="#2a2a2a" stroke-width="1"/>
<text x="1116.5" y="523.1" text-anchor="start" font-size="12">10<tspan dy="-6.1">4</tspan></text>
<text x="1116.5" y="562.1" text-anchor="start" font-size="12">10<tspan dy="-6.1">2</tspan></text>
<text x="1116.5" y="602.1" text-anchor="start" font-size="12">10<tspan dy="-6.1">0</tspan></text>
<text x="1116.5" y="641.1" text-anchor="start" font-size="12">10<tspan textLength="6.8" lengthAdjust="spacingAndGlyphs" dy="-6.1">-</tspan><tspan dx="0.3">2</tspan></text>
<text x="1116.5" y="680.1" text-anchor="start" font-size="12">10<tspan textLength="6.8" lengthAdjust="spacingAndGlyphs" dy="-6.1">-</tspan><tspan dx="0.3">4</tspan></text>
<path d="M1104.5 515.5h8M1104.5 535.5h4M1104.5 554.5h8M1104.5 574.5h4M1104.5 594.5h8M1104.5 613.5h4M1104.5 633.5h8M1104.5 652.5h4M1104.5 672.5h8M1104.5 691.5h4" stroke="#2a2a2a" fill="none"/>
<text x="1155.5" y="601.5" text-anchor="middle" font-size="12" textLength="166" lengthAdjust="spacingAndGlyphs" transform="rotate(90 1155.5 601.5)">intensity 1/(s cm^2 ster keV)</text>
<rect x="95.0" y="695" width="986.0" height="16" fill="#00ff00"/>
<path d="M95.0 695.5H1081.0M95.0 710.5H1081.0" stroke="#2a2a2a" fill="none"/>
<rect x="95.0" y="695" width="2" height="16" fill="#000"/>
<text x="79" y="707" text-anchor="end" font-size="12" textLength="49.5" lengthAdjust="spacingAndGlyphs">Sunlight?</text>
<path d="M136.5 711V715M177.5 711V715M218.5 711V719M259.5 711V715M300.5 711V715M341.5 711V719M382.5 711V715M423.5 711V715M465.5 711V719M506.5 711V715M547.5 711V715M588.5 711V719M629.5 711V715M670.5 711V715M711.5 711V719M752.5 711V715M793.5 711V715M834.5 711V719M875.5 711V715M916.5 711V715M957.5 711V719M998.5 711V715M1039.5 711V715M1080.5 711V719" stroke="#2a2a2a" fill="none"/>
<text x="235.0" y="734.4" text-anchor="end" font-size="12" textLength="36.1" lengthAdjust="spacingAndGlyphs">03:00</text>
<text x="235.0" y="749.4" text-anchor="end" font-size="12" textLength="27.9" lengthAdjust="spacingAndGlyphs">8.43</text>
<text x="235.0" y="764.4" text-anchor="end" font-size="12" textLength="35.9" lengthAdjust="spacingAndGlyphs">31.22</text>
<text x="235.0" y="779.4" text-anchor="end" font-size="12" textLength="35.9" lengthAdjust="spacingAndGlyphs">38.43</text>
<text x="358.5" y="734.4" text-anchor="end" font-size="12" textLength="36.1" lengthAdjust="spacingAndGlyphs">06:00</text>
<text x="358.5" y="749.4" text-anchor="end" font-size="12" textLength="27.9" lengthAdjust="spacingAndGlyphs">8.48</text>
<text x="358.5" y="764.4" text-anchor="end" font-size="12" textLength="35.9" lengthAdjust="spacingAndGlyphs">30.70</text>
<text x="358.5" y="779.4" text-anchor="end" font-size="12" textLength="35.9" lengthAdjust="spacingAndGlyphs">37.84</text>
<text x="481.5" y="734.4" text-anchor="end" font-size="12" textLength="36.1" lengthAdjust="spacingAndGlyphs">09:00</text>
<text x="481.5" y="749.4" text-anchor="end" font-size="12" textLength="27.9" lengthAdjust="spacingAndGlyphs">8.52</text>
<text x="481.5" y="764.4" text-anchor="end" font-size="12" textLength="35.9" lengthAdjust="spacingAndGlyphs">30.17</text>
<text x="481.5" y="779.4" text-anchor="end" font-size="12" textLength="35.9" lengthAdjust="spacingAndGlyphs">37.22</text>
<text x="604.5" y="734.4" text-anchor="end" font-size="12" textLength="36.1" lengthAdjust="spacingAndGlyphs">12:00</text>
<text x="604.5" y="749.4" text-anchor="end" font-size="12" textLength="27.9" lengthAdjust="spacingAndGlyphs">8.57</text>
<text x="604.5" y="764.4" text-anchor="end" font-size="12" textLength="35.9" lengthAdjust="spacingAndGlyphs">29.62</text>
<text x="604.5" y="779.4" text-anchor="end" font-size="12" textLength="35.9" lengthAdjust="spacingAndGlyphs">36.58</text>
<text x="728.0" y="734.4" text-anchor="end" font-size="12" textLength="36.1" lengthAdjust="spacingAndGlyphs">15:00</text>
<text x="728.0" y="749.4" text-anchor="end" font-size="12" textLength="27.9" lengthAdjust="spacingAndGlyphs">8.63</text>
<text x="728.0" y="764.4" text-anchor="end" font-size="12" textLength="35.9" lengthAdjust="spacingAndGlyphs">29.05</text>
<text x="728.0" y="779.4" text-anchor="end" font-size="12" textLength="35.9" lengthAdjust="spacingAndGlyphs">35.91</text>
<text x="851.0" y="734.4" text-anchor="end" font-size="12" textLength="36.1" lengthAdjust="spacingAndGlyphs">18:00</text>
<text x="851.0" y="749.4" text-anchor="end" font-size="12" textLength="27.9" lengthAdjust="spacingAndGlyphs">8.68</text>
<text x="851.0" y="764.4" text-anchor="end" font-size="12" textLength="35.9" lengthAdjust="spacingAndGlyphs">28.47</text>
<text x="851.0" y="779.4" text-anchor="end" font-size="12" textLength="35.9" lengthAdjust="spacingAndGlyphs">35.22</text>
<text x="974.0" y="734.4" text-anchor="end" font-size="12" textLength="36.1" lengthAdjust="spacingAndGlyphs">21:00</text>
<text x="974.0" y="749.4" text-anchor="end" font-size="12" textLength="27.9" lengthAdjust="spacingAndGlyphs">8.74</text>
<text x="974.0" y="764.4" text-anchor="end" font-size="12" textLength="35.9" lengthAdjust="spacingAndGlyphs">27.86</text>
<text x="974.0" y="779.4" text-anchor="end" font-size="12" textLength="35.9" lengthAdjust="spacingAndGlyphs">34.50</text>
<text x="1097.5" y="734.4" text-anchor="end" font-size="12" textLength="36.1" lengthAdjust="spacingAndGlyphs">00:00</text>
<text x="1097.5" y="749.4" text-anchor="end" font-size="12" textLength="27.9" lengthAdjust="spacingAndGlyphs">8.80</text>
<text x="1097.5" y="764.4" text-anchor="end" font-size="12" textLength="35.9" lengthAdjust="spacingAndGlyphs">27.23</text>
<text x="1097.5" y="779.4" text-anchor="end" font-size="12" textLength="35.9" lengthAdjust="spacingAndGlyphs">33.75</text>
<text x="59.8" y="749.4" text-anchor="end" font-size="12" textLength="43.5" lengthAdjust="spacingAndGlyphs">LT (hrs)</text>
<text x="59.8" y="764.4" text-anchor="end" font-size="12">Rs</text>
<text x="59.8" y="779.4" text-anchor="end" font-size="12" textLength="46.5" lengthAdjust="spacingAndGlyphs">Dipole L</text>
<rect x="215.5" y="802.5" width="151.0" height="147.0" fill="#fff" stroke="#2a2a2a" stroke-width="1"/>
<path d="M216.5 949.5v8M235.5 949.5v4M254.5 949.5v8M273.5 949.5v4M292.5 949.5v8M310.5 949.5v4M329.5 949.5v8M348.5 949.5v4M366.5 949.5v8M207.0 803.5H215.5M211.0 805.5H215.5M211.0 807.5H215.5M211.0 809.5H215.5M211.0 811.5H215.5M211.0 812.5H215.5M211.0 814.5H215.5M211.0 816.5H215.5M211.0 818.5H215.5M211.0 820.5H215.5M207.0 821.5H215.5M211.0 823.5H215.5M211.0 825.5H215.5M211.0 827.5H215.5M211.0 829.5H215.5M211.0 831.5H215.5M211.0 832.5H215.5M211.0 834.5H215.5M211.0 836.5H215.5M211.0 838.5H215.5M207.0 840.5H215.5M211.0 841.5H215.5M211.0 843.5H215.5M211.0 845.5H215.5M211.0 847.5H215.5M211.0 849.5H215.5M211.0 851.5H215.5M211.0 852.5H215.5M211.0 854.5H215.5M211.0 856.5H215.5M207.0 858.5H215.5M211.0 860.5H215.5M211.0 861.5H215.5M211.0 863.5H215.5M211.0 865.5H215.5M211.0 867.5H215.5M211.0 869.5H215.5M211.0 871.5H215.5M211.0 872.5H215.5M211.0 874.5H215.5M207.0 876.5H215.5M211.0 878.5H215.5M211.0 880.5H215.5M211.0 881.5H215.5M211.0 883.5H215.5M211.0 885.5H215.5M211.0 887.5H215.5M211.0 889.5H215.5M211.0 891.5H215.5M211.0 892.5H215.5M207.0 894.5H215.5M211.0 896.5H215.5M211.0 898.5H215.5M211.0 900.5H215.5M211.0 901.5H215.5M211.0 903.5H215.5M211.0 905.5H215.5M211.0 907.5H215.5M211.0 909.5H215.5M211.0 911.5H215.5M207.0 912.5H215.5M211.0 914.5H215.5M211.0 916.5H215.5M211.0 918.5H215.5M211.0 920.5H215.5M211.0 921.5H215.5M211.0 923.5H215.5M211.0 925.5H215.5M211.0 927.5H215.5M211.0 929.5H215.5M207.0 931.5H215.5M211.0 932.5H215.5M211.0 934.5H215.5M211.0 936.5H215.5M211.0 938.5H215.5M211.0 940.5H215.5M211.0 941.5H215.5M211.0 943.5H215.5M211.0 945.5H215.5M211.0 947.5H215.5M207.0 949.5H215.5" stroke="#2a2a2a" fill="none"/>
<text x="215.3" y="973.5" text-anchor="middle">40.</text>
<text x="252.8" y="973.5" text-anchor="middle">20.</text>
<text x="290.3" y="973.5" text-anchor="middle">0.</text>
<text x="327.8" y="973.5" text-anchor="middle"><tspan textLength="7.5" lengthAdjust="spacingAndGlyphs" dy="-0.5">-</tspan><tspan dy="0.5">20.</tspan></text>
<text x="365.3" y="973.5" text-anchor="middle"><tspan textLength="7.5" lengthAdjust="spacingAndGlyphs" dy="-0.5">-</tspan><tspan dy="0.5">40.</tspan></text>
<text x="202.3" y="808.4" text-anchor="end"><tspan textLength="7.5" lengthAdjust="spacingAndGlyphs" dy="-0.5">-</tspan><tspan dy="0.5">40.</tspan></text>
<text x="202.3" y="826.4" text-anchor="end"><tspan textLength="7.5" lengthAdjust="spacingAndGlyphs" dy="-0.5">-</tspan><tspan dy="0.5">30.</tspan></text>
<text x="202.3" y="844.4" text-anchor="end"><tspan textLength="7.5" lengthAdjust="spacingAndGlyphs" dy="-0.5">-</tspan><tspan dy="0.5">20.</tspan></text>
<text x="202.3" y="862.4" text-anchor="end"><tspan textLength="7.5" lengthAdjust="spacingAndGlyphs" dy="-0.5">-</tspan><tspan dy="0.5">10.</tspan></text>
<text x="202.3" y="880.4" text-anchor="end">0.</text>
<text x="202.3" y="899.4" text-anchor="end">10.</text>
<text x="202.3" y="917.4" text-anchor="end">20.</text>
<text x="202.3" y="935.4" text-anchor="end">30.</text>
<text x="202.3" y="953.4" text-anchor="end">40.</text>
<text x="270.8" y="991.8"><tspan textLength="23.3" lengthAdjust="spacingAndGlyphs">KSM</tspan><tspan textLength="5.8" lengthAdjust="spacingAndGlyphs" dx="1.0" dy="-0.5">-</tspan><tspan dx="0.5" dy="0.5">X</tspan></text>
<text x="-20" y="0" transform="translate(167 876.3) rotate(-90)"><tspan textLength="23.3" lengthAdjust="spacingAndGlyphs">KSM</tspan><tspan textLength="5.8" lengthAdjust="spacingAndGlyphs" dx="1.0" dy="-0.5">-</tspan><tspan dx="1.5" dy="0.5">Y</tspan></text>
<g fill="none">
<path d="M248.8 803.0L246.5 806.6L244.3 810.3L242.2 814.0L240.2 817.6L238.4 821.2L236.7 824.9L235.1 828.5L233.6 832.2L232.2 835.9L231.0 839.5L229.8 843.1L228.8 846.8L227.9 850.5L227.1 854.1L226.5 857.8L226.0 861.4L225.5 865.0L225.2 868.7L225.1 872.4L225.0 876.0L225.1 879.6L225.2 883.3L225.5 887.0L226.0 890.6L226.5 894.2L227.1 897.9L227.9 901.5L228.8 905.2L229.8 908.9L231.0 912.5L232.2 916.1L233.6 919.8L235.1 923.5L236.7 927.1L238.4 930.8L240.2 934.4L242.2 938.0L244.3 941.7L246.5 945.4L248.8 949.0" stroke="#0000ff" stroke-width="1.2" stroke-dasharray="2.2 1.7"/>
<path d="M282.0 803.0L278.1 806.6L274.5 810.3L271.0 814.0L267.8 817.6L264.7 821.2L261.8 824.9L259.1 828.5L256.7 832.2L254.4 835.9L252.3 839.5L250.4 843.1L248.7 846.8L247.1 850.5L245.8 854.1L244.7 857.8L243.8 861.4L243.0 865.0L242.5 868.7L242.2 872.4L242.0 876.0L242.1 879.6L242.3 883.3L242.7 887.0L243.4 890.6L244.2 894.2L245.2 897.9L246.4 901.5L247.8 905.2L249.4 908.9L251.2 912.5L253.2 916.1L255.4 919.8L257.8 923.5L260.3 927.1L263.1 930.8L266.1 934.4L269.2 938.0L272.6 941.7L276.1 945.4L279.8 949.0" stroke="#8b4513" stroke-width="1.25" stroke-dasharray="2.2 1.7"/>
<ellipse cx="292.5" cy="876.5" rx="36.3" ry="37" stroke="#000" stroke-width="1.5"/>
<path d="M267.5 806.5C266.9 807.1 265.0 808.6 264 810C263.0 811.4 262.0 813.2 261.3 815C260.6 816.8 260.2 818.9 260 821C259.8 823.1 259.7 824.2 259.9 827.5C260.1 830.8 260.4 836.8 261 841C261.6 845.2 262.3 849.0 263.5 853C264.7 857.0 266.4 861.6 268 865C269.6 868.4 270.8 870.7 273 873.5C275.2 876.3 278.0 880.0 281 882C284.0 884.0 288.3 885.1 291 885.5C293.7 885.9 295.1 885.3 297 884.5C298.9 883.7 300.7 882.4 302.5 880.5C304.3 878.6 306.3 875.8 308 873C309.7 870.2 311.8 865.5 312.5 864" stroke="#000" stroke-width="1.5"/>
<ellipse cx="291.7" cy="877" rx="2" ry="1.5" stroke="#000" stroke-width="0.8"/>
</g>
<path d="M260.2 828.3L260.9 838.7" stroke="#0000ff" stroke-width="5" fill="none" stroke-linecap="round"/>
<rect x="281.8" y="838" width="4" height="4" rx="1.2" fill="#ff0000"/>
<path d="M254.8 824.0L263.8 833.0M254.8 833.0L263.8 824.0" stroke="#ff0000" stroke-width="1.1" fill="none"/>
<rect x="509.5" y="802.5" width="151.0" height="147.0" fill="#fff" stroke="#2a2a2a" stroke-width="1"/>
<path d="M510.5 949.5v8M529.5 949.5v4M548.5 949.5v8M567.5 949.5v4M586.5 949.5v8M604.5 949.5v4M623.5 949.5v8M642.5 949.5v4M660.5 949.5v8M501.0 803.5H509.5M505.0 805.5H509.5M505.0 807.5H509.5M505.0 809.5H509.5M505.0 811.5H509.5M505.0 812.5H509.5M505.0 814.5H509.5M505.0 816.5H509.5M505.0 818.5H509.5M505.0 820.5H509.5M501.0 821.5H509.5M505.0 823.5H509.5M505.0 825.5H509.5M505.0 827.5H509.5M505.0 829.5H509.5M505.0 831.5H509.5M505.0 832.5H509.5M505.0 834.5H509.5M505.0 836.5H509.5M505.0 838.5H509.5M501.0 840.5H509.5M505.0 841.5H509.5M505.0 843.5H509.5M505.0 845.5H509.5M505.0 847.5H509.5M505.0 849.5H509.5M505.0 851.5H509.5M505.0 852.5H509.5M505.0 854.5H509.5M505.0 856.5H509.5M501.0 858.5H509.5M505.0 860.5H509.5M505.0 861.5H509.5M505.0 863.5H509.5M505.0 865.5H509.5M505.0 867.5H509.5M505.0 869.5H509.5M505.0 871.5H509.5M505.0 872.5H509.5M505.0 874.5H509.5M501.0 876.5H509.5M505.0 878.5H509.5M505.0 880.5H509.5M505.0 881.5H509.5M505.0 883.5H509.5M505.0 885.5H509.5M505.0 887.5H509.5M505.0 889.5H509.5M505.0 891.5H509.5M505.0 892.5H509.5M501.0 894.5H509.5M505.0 896.5H509.5M505.0 898.5H509.5M505.0 900.5H509.5M505.0 901.5H509.5M505.0 903.5H509.5M505.0 905.5H509.5M505.0 907.5H509.5M505.0 909.5H509.5M505.0 911.5H509.5M501.0 912.5H509.5M505.0 914.5H509.5M505.0 916.5H509.5M505.0 918.5H509.5M505.0 920.5H509.5M505.0 921.5H509.5M505.0 923.5H509.5M505.0 925.5H509.5M505.0 927.5H509.5M505.0 929.5H509.5M501.0 931.5H509.5M505.0 932.5H509.5M505.0 934.5H509.5M505.0 936.5H509.5M505.0 938.5H509.5M505.0 940.5H509.5M505.0 941.5H509.5M505.0 943.5H509.5M505.0 945.5H509.5M505.0 947.5H509.5M501.0 949.5H509.5" stroke="#2a2a2a" fill="none"/>
<text x="509.3" y="973.5" text-anchor="middle">40.</text>
<text x="546.8" y="973.5" text-anchor="middle">20.</text>
<text x="584.3" y="973.5" text-anchor="middle">0.</text>
<text x="621.8" y="973.5" text-anchor="middle"><tspan textLength="7.5" lengthAdjust="spacingAndGlyphs" dy="-0.5">-</tspan><tspan dy="0.5">20.</tspan></text>
<text x="659.3" y="973.5" text-anchor="middle"><tspan textLength="7.5" lengthAdjust="spacingAndGlyphs" dy="-0.5">-</tspan><tspan dy="0.5">40.</tspan></text>
<text x="496.3" y="808.4" text-anchor="end">40.</text>
<text x="496.3" y="826.4" text-anchor="end">30.</text>
<text x="496.3" y="844.4" text-anchor="end">20.</text>
<text x="496.3" y="862.4" text-anchor="end">10.</text>
<text x="496.3" y="880.4" text-anchor="end">0.</text>
<text x="496.3" y="899.4" text-anchor="end"><tspan textLength="7.5" lengthAdjust="spacingAndGlyphs" dy="-0.5">-</tspan><tspan dy="0.5">10.</tspan></text>
<text x="496.3" y="917.4" text-anchor="end"><tspan textLength="7.5" lengthAdjust="spacingAndGlyphs" dy="-0.5">-</tspan><tspan dy="0.5">20.</tspan></text>
<text x="496.3" y="935.4" text-anchor="end"><tspan textLength="7.5" lengthAdjust="spacingAndGlyphs" dy="-0.5">-</tspan><tspan dy="0.5">30.</tspan></text>
<text x="496.3" y="953.4" text-anchor="end"><tspan textLength="7.5" lengthAdjust="spacingAndGlyphs" dy="-0.5">-</tspan><tspan dy="0.5">40.</tspan></text>
<text x="564.8" y="991.8"><tspan textLength="23.3" lengthAdjust="spacingAndGlyphs">KSM</tspan><tspan textLength="5.8" lengthAdjust="spacingAndGlyphs" dx="1.0" dy="-0.5">-</tspan><tspan dx="0.5" dy="0.5">X</tspan></text>
<text x="-20" y="0" transform="translate(461.5 876.3) rotate(-90)"><tspan textLength="23.3" lengthAdjust="spacingAndGlyphs">KSM</tspan><tspan textLength="5.8" lengthAdjust="spacingAndGlyphs" dx="1.0" dy="-0.5">-</tspan><tspan dx="0.5" dy="0.5">Z</tspan></text>
<g fill="none">
<path d="M543.2 803.0L540.8 806.6L538.6 810.3L536.5 814.0L534.5 817.6L532.7 821.2L531.0 824.9L529.3 828.5L527.8 832.2L526.5 835.9L525.2 839.5L524.1 843.1L523.0 846.8L522.1 850.5L521.4 854.1L520.7 857.8L520.2 861.4L519.7 865.0L519.4 868.7L519.3 872.4L519.2 876.0L519.3 879.6L519.4 883.3L519.7 887.0L520.2 890.6L520.7 894.2L521.4 897.9L522.1 901.5L523.0 905.2L524.1 908.9L525.2 912.5L526.5 916.1L527.8 919.8L529.3 923.5L531.0 927.1L532.7 930.8L534.5 934.4L536.5 938.0L538.6 941.7L540.8 945.4L543.2 949.0" stroke="#0000ff" stroke-width="1.2" stroke-dasharray="2.2 1.7"/>
<path d="M575.9 804.0L572.1 807.6L568.4 811.2L564.9 814.9L561.6 818.5L558.5 822.1L555.6 825.8L552.9 829.4L550.4 833.0L548.1 836.6L546.0 840.2L544.1 843.9L542.4 847.5L540.9 851.1L539.6 854.8L538.5 858.4L537.6 862.0L536.9 865.6L536.4 869.2L536.1 872.9L536.0 876.5L536.1 880.1L536.4 883.8L536.9 887.4L537.6 891.0L538.5 894.6L539.6 898.2L540.9 901.9L542.4 905.5L544.1 909.1L546.0 912.8L548.1 916.4L550.4 920.0L552.9 923.6L555.6 927.2L558.5 930.9L561.6 934.5L564.9 938.1L568.4 941.8L572.1 945.4L575.9 949.0" stroke="#8b4513" stroke-width="1.25" stroke-dasharray="2.2 1.7"/>
<path d="M550.4 864.9L622.9 889.4" stroke="#000" stroke-width="1.7"/>
<ellipse cx="585.9" cy="877" rx="2" ry="1.5" stroke="#000" stroke-width="0.8" fill="#fff"/>
</g>
<circle cx="554.4" cy="866.2" r="2.2" fill="#0000ff"/>
<rect x="576" y="872.2" width="4" height="4" rx="1.2" fill="#ff0000"/>
<path d="M549.1 860.9L558.1 869.9M549.1 869.9L558.1 860.9" stroke="#ff0000" stroke-width="1.1" fill="none"/>
<rect x="803.5" y="802.5" width="151.0" height="147.0" fill="#fff" stroke="#2a2a2a" stroke-width="1"/>
<path d="M804.5 949.5v8M823.5 949.5v4M842.5 949.5v8M861.5 949.5v4M880.5 949.5v8M898.5 949.5v4M917.5 949.5v8M936.5 949.5v4M954.5 949.5v8M795.0 803.5H803.5M799.0 805.5H803.5M799.0 807.5H803.5M799.0 809.5H803.5M799.0 811.5H803.5M799.0 812.5H803.5M799.0 814.5H803.5M799.0 816.5H803.5M799.0 818.5H803.5M799.0 820.5H803.5M795.0 821.5H803.5M799.0 823.5H803.5M799.0 825.5H803.5M799.0 827.5H803.5M799.0 829.5H803.5M799.0 831.5H803.5M799.0 832.5H803.5M799.0 834.5H803.5M799.0 836.5H803.5M799.0 838.5H803.5M795.0 840.5H803.5M799.0 841.5H803.5M799.0 843.5H803.5M799.0 845.5H803.5M799.0 847.5H803.5M799.0 849.5H803.5M799.0 851.5H803.5M799.0 852.5H803.5M799.0 854.5H803.5M799.0 856.5H803.5M795.0 858.5H803.5M799.0 860.5H803.5M799.0 861.5H803.5M799.0 863.5H803.5M799.0 865.5H803.5M799.0 867.5H803.5M799.0 869.5H803.5M799.0 871.5H803.5M799.0 872.5H803.5M799.0 874.5H803.5M795.0 876.5H803.5M799.0 878.5H803.5M799.0 880.5H803.5M799.0 881.5H803.5M799.0 883.5H803.5M799.0 885.5H803.5M799.0 887.5H803.5M799.0 889.5H803.5M799.0 891.5H803.5M799.0 892.5H803.5M795.0 894.5H803.5M799.0 896.5H803.5M799.0 898.5H803.5M799.0 900.5H803.5M799.0 901.5H803.5M799.0 903.5H803.5M799.0 905.5H803.5M799.0 907.5H803.5M799.0 909.5H803.5M799.0 911.5H803.5M795.0 912.5H803.5M799.0 914.5H803.5M799.0 916.5H803.5M799.0 918.5H803.5M799.0 920.5H803.5M799.0 921.5H803.5M799.0 923.5H803.5M799.0 925.5H803.5M799.0 927.5H803.5M799.0 929.5H803.5M795.0 931.5H803.5M799.0 932.5H803.5M799.0 934.5H803.5M799.0 936.5H803.5M799.0 938.5H803.5M799.0 940.5H803.5M799.0 941.5H803.5M799.0 943.5H803.5M799.0 945.5H803.5M799.0 947.5H803.5M795.0 949.5H803.5" stroke="#2a2a2a" fill="none"/>
<text x="803.3" y="973.5" text-anchor="middle"><tspan textLength="7.5" lengthAdjust="spacingAndGlyphs" dy="-0.5">-</tspan><tspan dy="0.5">40.</tspan></text>
<text x="840.8" y="973.5" text-anchor="middle"><tspan textLength="7.5" lengthAdjust="spacingAndGlyphs" dy="-0.5">-</tspan><tspan dy="0.5">20.</tspan></text>
<text x="878.3" y="973.5" text-anchor="middle">0.</text>
<text x="915.8" y="973.5" text-anchor="middle">20.</text>
<text x="953.3" y="973.5" text-anchor="middle">40.</text>
<text x="790.3" y="808.4" text-anchor="end">40.</text>
<text x="790.3" y="826.4" text-anchor="end">30.</text>
<text x="790.3" y="844.4" text-anchor="end">20.</text>
<text x="790.3" y="862.4" text-anchor="end">10.</text>
<text x="790.3" y="880.4" text-anchor="end">0.</text>
<text x="790.3" y="899.4" text-anchor="end"><tspan textLength="7.5" lengthAdjust="spacingAndGlyphs" dy="-0.5">-</tspan><tspan dy="0.5">10.</tspan></text>
<text x="790.3" y="917.4" text-anchor="end"><tspan textLength="7.5" lengthAdjust="spacingAndGlyphs" dy="-0.5">-</tspan><tspan dy="0.5">20.</tspan></text>
<text x="790.3" y="935.4" text-anchor="end"><tspan textLength="7.5" lengthAdjust="spacingAndGlyphs" dy="-0.5">-</tspan><tspan dy="0.5">30.</tspan></text>
<text x="790.3" y="953.4" text-anchor="end"><tspan textLength="7.5" lengthAdjust="spacingAndGlyphs" dy="-0.5">-</tspan><tspan dy="0.5">40.</tspan></text>
<text x="858.8" y="991.8"><tspan textLength="23.3" lengthAdjust="spacingAndGlyphs">KSM</tspan><tspan textLength="5.8" lengthAdjust="spacingAndGlyphs" dx="1.0" dy="-0.5">-</tspan><tspan dx="1.5" dy="0.5">Y</tspan></text>
<text x="-20" y="0" transform="translate(755.5 876.3) rotate(-90)"><tspan textLength="23.3" lengthAdjust="spacingAndGlyphs">KSM</tspan><tspan textLength="5.8" lengthAdjust="spacingAndGlyphs" dx="1.0" dy="-0.5">-</tspan><tspan dx="0.5" dy="0.5">Z</tspan></text>
<clipPath id="c3"><rect x="804.0" y="803.0" width="150.0" height="146.0"/></clipPath>
<g fill="none">
<circle cx="879" cy="876.4" r="90" stroke="#0000ff" stroke-width="1.25" stroke-dasharray="2.2 1.7" clip-path="url(#c3)"/>
<ellipse cx="878.9" cy="876.4" rx="50.8" ry="49.4" stroke="#8b4513" stroke-width="1.25" stroke-dasharray="2.2 1.7"/>
<ellipse cx="878.8" cy="877.4" rx="38.6" ry="12.8" stroke="#000" stroke-width="1.5" transform="rotate(1 878.8 877.4)"/>
<path d="M808.1 868.3C809.9 868.0 815.5 866.9 819 866.5C822.5 866.1 825.4 865.8 829.4 865.7C833.4 865.7 838.1 865.9 843 866.2C847.9 866.6 854.2 867.1 859 867.8C863.8 868.5 867.9 869.4 871.8 870.2C875.7 871.1 879.6 872.0 882.2 872.9C884.8 873.8 886.3 874.9 887.3 875.6C888.3 876.4 888.6 876.6 888.3 877.4C888.0 878.1 887.3 879.2 885.4 880.1C883.5 881.0 879.8 882.0 876.6 882.7C873.4 883.4 867.9 884.0 866.2 884.3" stroke="#000" stroke-width="1.5"/>
<ellipse cx="879.3" cy="877.1" rx="2" ry="1.5" stroke="#000" stroke-width="0.8"/>
</g>
<path d="M830 866.5H841.9" stroke="#0000ff" stroke-width="4.8" fill="none"/>
<rect x="840" y="872.5" width="4" height="4" rx="1.5" fill="#ff0000"/>
<path d="M824.9 861.1L833.9 870.1M824.9 870.1L833.9 861.1" stroke="#ff0000" stroke-width="1.1" fill="none"/>
</svg>
</body></html>
